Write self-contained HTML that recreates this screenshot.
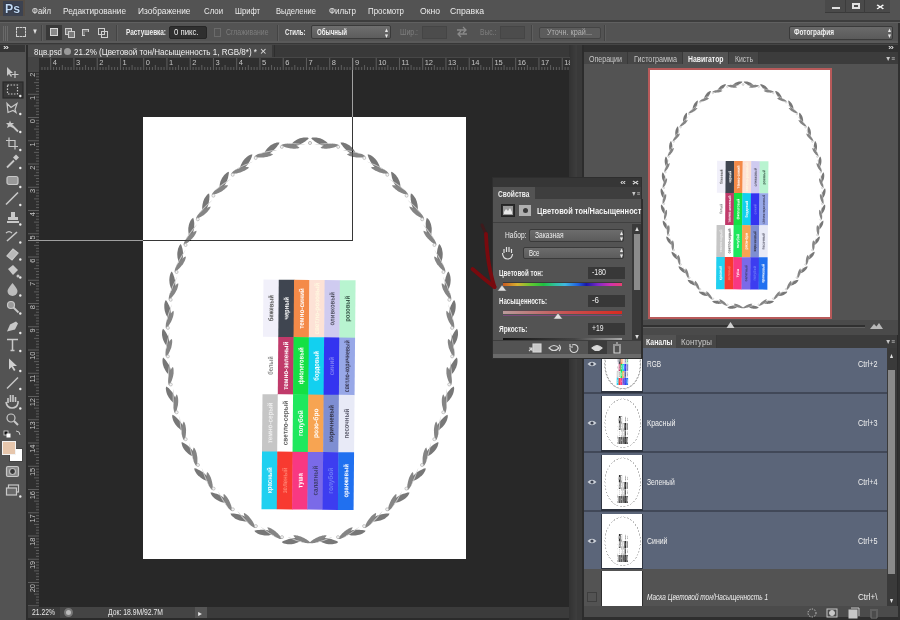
<!DOCTYPE html>
<html><head><meta charset="utf-8">
<style>
*{margin:0;padding:0;box-sizing:border-box}
html,body{width:900px;height:620px;overflow:hidden;background:#535353;font-family:"Liberation Sans",sans-serif}
.a{position:absolute}
.t{position:absolute;white-space:nowrap;transform-origin:0 0}
</style></head><body>
<div class="a" style="left:0px;top:0px;width:900px;height:20px;background:#535353;"></div>
<div class="a" style="left:0px;top:20px;width:900px;height:2px;background:#3d3d3d;"></div>
<div class="a" style="left:0px;top:22px;width:900px;height:1px;background:#606060;"></div>
<div class="a" style="left:0px;top:23px;width:900px;height:18px;background:#535353;"></div>
<div class="a" style="left:0px;top:41px;width:900px;height:2px;background:#5a5a5a;"></div>
<div class="a" style="left:0px;top:43px;width:900px;height:1px;background:#383838;"></div>
<div class="a" style="left:0px;top:44px;width:900px;height:1px;background:#454545;"></div>
<div class="a" style="left:0px;top:45px;width:26px;height:575px;background:#535353;"></div>
<div class="a" style="left:0px;top:45px;width:25px;height:7px;background:#353535;"></div>
<div class="a" style="left:26px;top:45px;width:2px;height:575px;background:#2c2c2c;"></div>
<div class="a" style="left:28px;top:45px;width:542px;height:12px;background:#393939;"></div>
<div class="a" style="left:28px;top:45px;width:244px;height:12px;background:#4b4b4b;"></div>
<div class="a" style="left:274px;top:45px;width:1px;height:12px;background:#2e2e2e;"></div>
<div class="a" style="left:28px;top:57px;width:542px;height:13px;background:#2f2f2f;"></div>
<div class="a" style="left:28px;top:57px;width:11px;height:550px;background:#2f2f2f;"></div>
<div class="a" style="left:28px;top:57px;width:11px;height:13px;background:#444444;"></div>
<div class="a" style="left:39px;top:70px;width:531px;height:537px;background:#282828;"></div>
<div class="a" style="left:28px;top:607px;width:542px;height:11px;background:#3b3b3b;"></div>
<div class="a" style="left:28px;top:618px;width:542px;height:2px;background:#2a2a2a;"></div>
<div class="a" style="left:569px;top:45px;width:8px;height:575px;background:linear-gradient(90deg,#323232,#3e3e3e);"></div>
<div class="a" style="left:577px;top:45px;width:5px;height:575px;background:#393939;"></div>
<div class="a" style="left:582px;top:45px;width:2px;height:575px;background:#2c2c2c;"></div>
<div class="a" style="left:584px;top:45px;width:316px;height:575px;background:#535353;"></div>
<div class="a" style="left:0px;top:0px;width:25px;height:16px;background:#544d46"></div>
<div class="a" style="left:3px;top:1px;width:20px;height:15px;background:#3c4250"></div>
<div class="a" style="left:825px;top:0px;width:65px;height:13px;background:#4a4a4a;"></div>
<div class="a" style="left:825px;top:12px;width:65px;height:1px;background:#3a3a3a;"></div>
<div class="a" style="left:845px;top:0px;width:1px;height:13px;background:#3c3c3c;"></div>
<div class="a" style="left:864px;top:0px;width:1px;height:13px;background:#3c3c3c;"></div>
<div class="a" style="left:832px;top:7px;width:8px;height:2px;background:#e0e0e0;"></div>
<div class="a" style="left:852px;top:3px;width:8px;height:6px;border:2px solid #e0e0e0;border-top-width:2px"></div>
<div class="a" style="left:3px;top:26px;width:1px;height:15px;background:#6a6a6a;"></div>
<div class="a" style="left:5px;top:26px;width:1px;height:15px;background:#6a6a6a;"></div>
<div class="a" style="left:7px;top:26px;width:1px;height:15px;background:#6a6a6a;"></div>
<div class="a" style="left:16px;top:27px;width:10px;height:10px;border:1px dashed #d0d0d0"></div>
<div class="a" style="left:41px;top:25px;width:1px;height:16px;background:#444;"></div>
<div class="a" style="left:42px;top:25px;width:1px;height:16px;background:#5e5e5e;"></div>
<div class="a" style="left:46px;top:25px;width:16px;height:15px;background:#393939;"></div>
<div class="a" style="left:50px;top:28px;width:8px;height:8px;border:1px solid #d8d8d8;background:#8a8a8a"></div>
<div class="a" style="left:65px;top:28px;width:7px;height:7px;border:1px solid #cfcfcf;background:#7a7a7a"></div><div class="a" style="left:68px;top:31px;width:7px;height:7px;border:1px solid #cfcfcf;background:#7a7a7a"></div>
<div class="a" style="left:82px;top:29px;width:7px;height:7px;border:1px solid #cfcfcf;background:#7a7a7a"></div><div class="a" style="left:85px;top:32px;width:5px;height:5px;background:#535353"></div>
<div class="a" style="left:98px;top:28px;width:7px;height:7px;border:1px solid #cfcfcf"></div><div class="a" style="left:101px;top:31px;width:7px;height:7px;border:1px solid #cfcfcf"></div>
<div class="a" style="left:116px;top:25px;width:1px;height:16px;background:#444;"></div>
<div class="a" style="left:117px;top:25px;width:1px;height:16px;background:#5e5e5e;"></div>
<div class="a" style="left:169px;top:26px;width:38px;height:13px;background:#2f2f2f;border-radius:2px;border:1px solid #262626"></div>
<div class="a" style="left:214px;top:28px;width:7px;height:9px;border:1px solid #6a6a6a"></div>
<div class="a" style="left:277px;top:25px;width:1px;height:16px;background:#444;"></div>
<div class="a" style="left:278px;top:25px;width:1px;height:16px;background:#5e5e5e;"></div>
<div class="a" style="left:311px;top:25px;width:80px;height:14px;background:linear-gradient(#6e6e6e,#5c5c5c);border:1px solid #3a3a3a;border-radius:2px"></div>
<div class="a" style="left:422px;top:26px;width:25px;height:13px;background:#4c4c4c;border:1px solid #454545"></div>
<svg class="a" style="left:456px;top:26px" width="12" height="12" fill="none" stroke="#8a8a8a" stroke-width="1.3"><path d="M1 4 h9 M7 1 l3 3 l-3 3 M11 8 h-9 M5 5 l-3 3 l3 3"/></svg>
<div class="a" style="left:500px;top:26px;width:25px;height:13px;background:#4c4c4c;border:1px solid #454545"></div>
<div class="a" style="left:531px;top:25px;width:1px;height:16px;background:#444;"></div>
<div class="a" style="left:532px;top:25px;width:1px;height:16px;background:#5e5e5e;"></div>
<div class="a" style="left:539px;top:27px;width:62px;height:12px;background:#5c5c5c;border:1px solid #444;border-radius:2px"></div>
<div class="a" style="left:604px;top:25px;width:1px;height:16px;background:#444;"></div>
<div class="a" style="left:605px;top:25px;width:1px;height:16px;background:#5e5e5e;"></div>
<div class="a" style="left:789px;top:26px;width:104px;height:14px;background:linear-gradient(#6a6a6a,#5a5a5a);border:1px solid #3a3a3a;border-radius:2px"></div>
<div class="a" style="left:64px;top:48px;width:7px;height:7px;border-radius:50%;background:#9a9a9a"></div>
<svg class="a" style="left:39px;top:57px" width="531" height="13"><rect x="2.48" y="10" width="1" height="3" fill="#5e5e5e"/><rect x="5.39" y="10" width="1" height="3" fill="#5e5e5e"/><rect x="8.29" y="10" width="1" height="3" fill="#5e5e5e"/><rect x="11.20" y="0" width="1" height="13" fill="#5e5e5e"/><rect x="14.11" y="10" width="1" height="3" fill="#5e5e5e"/><rect x="17.01" y="10" width="1" height="3" fill="#5e5e5e"/><rect x="19.92" y="10" width="1" height="3" fill="#5e5e5e"/><rect x="22.82" y="8" width="1" height="5" fill="#5e5e5e"/><rect x="25.73" y="10" width="1" height="3" fill="#5e5e5e"/><rect x="28.64" y="10" width="1" height="3" fill="#5e5e5e"/><rect x="31.54" y="10" width="1" height="3" fill="#5e5e5e"/><text x="13.70" y="8" font-size="7.5" fill="#c4c4c4" font-family="Liberation Sans">4</text><rect x="34.45" y="0" width="1" height="13" fill="#5e5e5e"/><rect x="37.36" y="10" width="1" height="3" fill="#5e5e5e"/><rect x="40.26" y="10" width="1" height="3" fill="#5e5e5e"/><rect x="43.17" y="10" width="1" height="3" fill="#5e5e5e"/><rect x="46.07" y="8" width="1" height="5" fill="#5e5e5e"/><rect x="48.98" y="10" width="1" height="3" fill="#5e5e5e"/><rect x="51.89" y="10" width="1" height="3" fill="#5e5e5e"/><rect x="54.79" y="10" width="1" height="3" fill="#5e5e5e"/><text x="36.95" y="8" font-size="7.5" fill="#c4c4c4" font-family="Liberation Sans">3</text><rect x="57.70" y="0" width="1" height="13" fill="#5e5e5e"/><rect x="60.61" y="10" width="1" height="3" fill="#5e5e5e"/><rect x="63.51" y="10" width="1" height="3" fill="#5e5e5e"/><rect x="66.42" y="10" width="1" height="3" fill="#5e5e5e"/><rect x="69.32" y="8" width="1" height="5" fill="#5e5e5e"/><rect x="72.23" y="10" width="1" height="3" fill="#5e5e5e"/><rect x="75.14" y="10" width="1" height="3" fill="#5e5e5e"/><rect x="78.04" y="10" width="1" height="3" fill="#5e5e5e"/><text x="60.20" y="8" font-size="7.5" fill="#c4c4c4" font-family="Liberation Sans">2</text><rect x="80.95" y="0" width="1" height="13" fill="#5e5e5e"/><rect x="83.86" y="10" width="1" height="3" fill="#5e5e5e"/><rect x="86.76" y="10" width="1" height="3" fill="#5e5e5e"/><rect x="89.67" y="10" width="1" height="3" fill="#5e5e5e"/><rect x="92.57" y="8" width="1" height="5" fill="#5e5e5e"/><rect x="95.48" y="10" width="1" height="3" fill="#5e5e5e"/><rect x="98.39" y="10" width="1" height="3" fill="#5e5e5e"/><rect x="101.29" y="10" width="1" height="3" fill="#5e5e5e"/><text x="83.45" y="8" font-size="7.5" fill="#c4c4c4" font-family="Liberation Sans">1</text><rect x="104.20" y="0" width="1" height="13" fill="#5e5e5e"/><rect x="107.11" y="10" width="1" height="3" fill="#5e5e5e"/><rect x="110.01" y="10" width="1" height="3" fill="#5e5e5e"/><rect x="112.92" y="10" width="1" height="3" fill="#5e5e5e"/><rect x="115.82" y="8" width="1" height="5" fill="#5e5e5e"/><rect x="118.73" y="10" width="1" height="3" fill="#5e5e5e"/><rect x="121.64" y="10" width="1" height="3" fill="#5e5e5e"/><rect x="124.54" y="10" width="1" height="3" fill="#5e5e5e"/><text x="106.70" y="8" font-size="7.5" fill="#c4c4c4" font-family="Liberation Sans">0</text><rect x="127.45" y="0" width="1" height="13" fill="#5e5e5e"/><rect x="130.36" y="10" width="1" height="3" fill="#5e5e5e"/><rect x="133.26" y="10" width="1" height="3" fill="#5e5e5e"/><rect x="136.17" y="10" width="1" height="3" fill="#5e5e5e"/><rect x="139.07" y="8" width="1" height="5" fill="#5e5e5e"/><rect x="141.98" y="10" width="1" height="3" fill="#5e5e5e"/><rect x="144.89" y="10" width="1" height="3" fill="#5e5e5e"/><rect x="147.79" y="10" width="1" height="3" fill="#5e5e5e"/><text x="129.95" y="8" font-size="7.5" fill="#c4c4c4" font-family="Liberation Sans">1</text><rect x="150.70" y="0" width="1" height="13" fill="#5e5e5e"/><rect x="153.61" y="10" width="1" height="3" fill="#5e5e5e"/><rect x="156.51" y="10" width="1" height="3" fill="#5e5e5e"/><rect x="159.42" y="10" width="1" height="3" fill="#5e5e5e"/><rect x="162.32" y="8" width="1" height="5" fill="#5e5e5e"/><rect x="165.23" y="10" width="1" height="3" fill="#5e5e5e"/><rect x="168.14" y="10" width="1" height="3" fill="#5e5e5e"/><rect x="171.04" y="10" width="1" height="3" fill="#5e5e5e"/><text x="153.20" y="8" font-size="7.5" fill="#c4c4c4" font-family="Liberation Sans">2</text><rect x="173.95" y="0" width="1" height="13" fill="#5e5e5e"/><rect x="176.86" y="10" width="1" height="3" fill="#5e5e5e"/><rect x="179.76" y="10" width="1" height="3" fill="#5e5e5e"/><rect x="182.67" y="10" width="1" height="3" fill="#5e5e5e"/><rect x="185.57" y="8" width="1" height="5" fill="#5e5e5e"/><rect x="188.48" y="10" width="1" height="3" fill="#5e5e5e"/><rect x="191.39" y="10" width="1" height="3" fill="#5e5e5e"/><rect x="194.29" y="10" width="1" height="3" fill="#5e5e5e"/><text x="176.45" y="8" font-size="7.5" fill="#c4c4c4" font-family="Liberation Sans">3</text><rect x="197.20" y="0" width="1" height="13" fill="#5e5e5e"/><rect x="200.11" y="10" width="1" height="3" fill="#5e5e5e"/><rect x="203.01" y="10" width="1" height="3" fill="#5e5e5e"/><rect x="205.92" y="10" width="1" height="3" fill="#5e5e5e"/><rect x="208.82" y="8" width="1" height="5" fill="#5e5e5e"/><rect x="211.73" y="10" width="1" height="3" fill="#5e5e5e"/><rect x="214.64" y="10" width="1" height="3" fill="#5e5e5e"/><rect x="217.54" y="10" width="1" height="3" fill="#5e5e5e"/><text x="199.70" y="8" font-size="7.5" fill="#c4c4c4" font-family="Liberation Sans">4</text><rect x="220.45" y="0" width="1" height="13" fill="#5e5e5e"/><rect x="223.36" y="10" width="1" height="3" fill="#5e5e5e"/><rect x="226.26" y="10" width="1" height="3" fill="#5e5e5e"/><rect x="229.17" y="10" width="1" height="3" fill="#5e5e5e"/><rect x="232.07" y="8" width="1" height="5" fill="#5e5e5e"/><rect x="234.98" y="10" width="1" height="3" fill="#5e5e5e"/><rect x="237.89" y="10" width="1" height="3" fill="#5e5e5e"/><rect x="240.79" y="10" width="1" height="3" fill="#5e5e5e"/><text x="222.95" y="8" font-size="7.5" fill="#c4c4c4" font-family="Liberation Sans">5</text><rect x="243.70" y="0" width="1" height="13" fill="#5e5e5e"/><rect x="246.61" y="10" width="1" height="3" fill="#5e5e5e"/><rect x="249.51" y="10" width="1" height="3" fill="#5e5e5e"/><rect x="252.42" y="10" width="1" height="3" fill="#5e5e5e"/><rect x="255.32" y="8" width="1" height="5" fill="#5e5e5e"/><rect x="258.23" y="10" width="1" height="3" fill="#5e5e5e"/><rect x="261.14" y="10" width="1" height="3" fill="#5e5e5e"/><rect x="264.04" y="10" width="1" height="3" fill="#5e5e5e"/><text x="246.20" y="8" font-size="7.5" fill="#c4c4c4" font-family="Liberation Sans">6</text><rect x="266.95" y="0" width="1" height="13" fill="#5e5e5e"/><rect x="269.86" y="10" width="1" height="3" fill="#5e5e5e"/><rect x="272.76" y="10" width="1" height="3" fill="#5e5e5e"/><rect x="275.67" y="10" width="1" height="3" fill="#5e5e5e"/><rect x="278.57" y="8" width="1" height="5" fill="#5e5e5e"/><rect x="281.48" y="10" width="1" height="3" fill="#5e5e5e"/><rect x="284.39" y="10" width="1" height="3" fill="#5e5e5e"/><rect x="287.29" y="10" width="1" height="3" fill="#5e5e5e"/><text x="269.45" y="8" font-size="7.5" fill="#c4c4c4" font-family="Liberation Sans">7</text><rect x="290.20" y="0" width="1" height="13" fill="#5e5e5e"/><rect x="293.11" y="10" width="1" height="3" fill="#5e5e5e"/><rect x="296.01" y="10" width="1" height="3" fill="#5e5e5e"/><rect x="298.92" y="10" width="1" height="3" fill="#5e5e5e"/><rect x="301.82" y="8" width="1" height="5" fill="#5e5e5e"/><rect x="304.73" y="10" width="1" height="3" fill="#5e5e5e"/><rect x="307.64" y="10" width="1" height="3" fill="#5e5e5e"/><rect x="310.54" y="10" width="1" height="3" fill="#5e5e5e"/><text x="292.70" y="8" font-size="7.5" fill="#c4c4c4" font-family="Liberation Sans">8</text><rect x="313.45" y="0" width="1" height="13" fill="#5e5e5e"/><rect x="316.36" y="10" width="1" height="3" fill="#5e5e5e"/><rect x="319.26" y="10" width="1" height="3" fill="#5e5e5e"/><rect x="322.17" y="10" width="1" height="3" fill="#5e5e5e"/><rect x="325.07" y="8" width="1" height="5" fill="#5e5e5e"/><rect x="327.98" y="10" width="1" height="3" fill="#5e5e5e"/><rect x="330.89" y="10" width="1" height="3" fill="#5e5e5e"/><rect x="333.79" y="10" width="1" height="3" fill="#5e5e5e"/><text x="315.95" y="8" font-size="7.5" fill="#c4c4c4" font-family="Liberation Sans">9</text><rect x="336.70" y="0" width="1" height="13" fill="#5e5e5e"/><rect x="339.61" y="10" width="1" height="3" fill="#5e5e5e"/><rect x="342.51" y="10" width="1" height="3" fill="#5e5e5e"/><rect x="345.42" y="10" width="1" height="3" fill="#5e5e5e"/><rect x="348.32" y="8" width="1" height="5" fill="#5e5e5e"/><rect x="351.23" y="10" width="1" height="3" fill="#5e5e5e"/><rect x="354.14" y="10" width="1" height="3" fill="#5e5e5e"/><rect x="357.04" y="10" width="1" height="3" fill="#5e5e5e"/><text x="339.20" y="8" font-size="7.5" fill="#c4c4c4" font-family="Liberation Sans">10</text><rect x="359.95" y="0" width="1" height="13" fill="#5e5e5e"/><rect x="362.86" y="10" width="1" height="3" fill="#5e5e5e"/><rect x="365.76" y="10" width="1" height="3" fill="#5e5e5e"/><rect x="368.67" y="10" width="1" height="3" fill="#5e5e5e"/><rect x="371.57" y="8" width="1" height="5" fill="#5e5e5e"/><rect x="374.48" y="10" width="1" height="3" fill="#5e5e5e"/><rect x="377.39" y="10" width="1" height="3" fill="#5e5e5e"/><rect x="380.29" y="10" width="1" height="3" fill="#5e5e5e"/><text x="362.45" y="8" font-size="7.5" fill="#c4c4c4" font-family="Liberation Sans">11</text><rect x="383.20" y="0" width="1" height="13" fill="#5e5e5e"/><rect x="386.11" y="10" width="1" height="3" fill="#5e5e5e"/><rect x="389.01" y="10" width="1" height="3" fill="#5e5e5e"/><rect x="391.92" y="10" width="1" height="3" fill="#5e5e5e"/><rect x="394.82" y="8" width="1" height="5" fill="#5e5e5e"/><rect x="397.73" y="10" width="1" height="3" fill="#5e5e5e"/><rect x="400.64" y="10" width="1" height="3" fill="#5e5e5e"/><rect x="403.54" y="10" width="1" height="3" fill="#5e5e5e"/><text x="385.70" y="8" font-size="7.5" fill="#c4c4c4" font-family="Liberation Sans">12</text><rect x="406.45" y="0" width="1" height="13" fill="#5e5e5e"/><rect x="409.36" y="10" width="1" height="3" fill="#5e5e5e"/><rect x="412.26" y="10" width="1" height="3" fill="#5e5e5e"/><rect x="415.17" y="10" width="1" height="3" fill="#5e5e5e"/><rect x="418.07" y="8" width="1" height="5" fill="#5e5e5e"/><rect x="420.98" y="10" width="1" height="3" fill="#5e5e5e"/><rect x="423.89" y="10" width="1" height="3" fill="#5e5e5e"/><rect x="426.79" y="10" width="1" height="3" fill="#5e5e5e"/><text x="408.95" y="8" font-size="7.5" fill="#c4c4c4" font-family="Liberation Sans">13</text><rect x="429.70" y="0" width="1" height="13" fill="#5e5e5e"/><rect x="432.61" y="10" width="1" height="3" fill="#5e5e5e"/><rect x="435.51" y="10" width="1" height="3" fill="#5e5e5e"/><rect x="438.42" y="10" width="1" height="3" fill="#5e5e5e"/><rect x="441.32" y="8" width="1" height="5" fill="#5e5e5e"/><rect x="444.23" y="10" width="1" height="3" fill="#5e5e5e"/><rect x="447.14" y="10" width="1" height="3" fill="#5e5e5e"/><rect x="450.04" y="10" width="1" height="3" fill="#5e5e5e"/><text x="432.20" y="8" font-size="7.5" fill="#c4c4c4" font-family="Liberation Sans">14</text><rect x="452.95" y="0" width="1" height="13" fill="#5e5e5e"/><rect x="455.86" y="10" width="1" height="3" fill="#5e5e5e"/><rect x="458.76" y="10" width="1" height="3" fill="#5e5e5e"/><rect x="461.67" y="10" width="1" height="3" fill="#5e5e5e"/><rect x="464.57" y="8" width="1" height="5" fill="#5e5e5e"/><rect x="467.48" y="10" width="1" height="3" fill="#5e5e5e"/><rect x="470.39" y="10" width="1" height="3" fill="#5e5e5e"/><rect x="473.29" y="10" width="1" height="3" fill="#5e5e5e"/><text x="455.45" y="8" font-size="7.5" fill="#c4c4c4" font-family="Liberation Sans">15</text><rect x="476.20" y="0" width="1" height="13" fill="#5e5e5e"/><rect x="479.11" y="10" width="1" height="3" fill="#5e5e5e"/><rect x="482.01" y="10" width="1" height="3" fill="#5e5e5e"/><rect x="484.92" y="10" width="1" height="3" fill="#5e5e5e"/><rect x="487.83" y="8" width="1" height="5" fill="#5e5e5e"/><rect x="490.73" y="10" width="1" height="3" fill="#5e5e5e"/><rect x="493.64" y="10" width="1" height="3" fill="#5e5e5e"/><rect x="496.54" y="10" width="1" height="3" fill="#5e5e5e"/><text x="478.70" y="8" font-size="7.5" fill="#c4c4c4" font-family="Liberation Sans">16</text><rect x="499.45" y="0" width="1" height="13" fill="#5e5e5e"/><rect x="502.36" y="10" width="1" height="3" fill="#5e5e5e"/><rect x="505.26" y="10" width="1" height="3" fill="#5e5e5e"/><rect x="508.17" y="10" width="1" height="3" fill="#5e5e5e"/><rect x="511.08" y="8" width="1" height="5" fill="#5e5e5e"/><rect x="513.98" y="10" width="1" height="3" fill="#5e5e5e"/><rect x="516.89" y="10" width="1" height="3" fill="#5e5e5e"/><rect x="519.79" y="10" width="1" height="3" fill="#5e5e5e"/><text x="501.95" y="8" font-size="7.5" fill="#c4c4c4" font-family="Liberation Sans">17</text><rect x="522.70" y="0" width="1" height="13" fill="#5e5e5e"/><rect x="525.61" y="10" width="1" height="3" fill="#5e5e5e"/><rect x="528.51" y="10" width="1" height="3" fill="#5e5e5e"/><text x="525.20" y="8" font-size="7.5" fill="#c4c4c4" font-family="Liberation Sans">18</text><rect x="0" y="0" width="531" height="1" fill="#474747"/></svg>
<svg class="a" style="left:28px;top:70px" width="11" height="537"><rect y="0.50" x="0" height="1" width="11" fill="#5e5e5e"/><rect y="3.41" x="8" height="1" width="3" fill="#5e5e5e"/><rect y="6.31" x="8" height="1" width="3" fill="#5e5e5e"/><rect y="9.22" x="8" height="1" width="3" fill="#5e5e5e"/><rect y="12.12" x="6" height="1" width="5" fill="#5e5e5e"/><rect y="15.03" x="8" height="1" width="3" fill="#5e5e5e"/><rect y="17.94" x="8" height="1" width="3" fill="#5e5e5e"/><rect y="20.84" x="8" height="1" width="3" fill="#5e5e5e"/><text x="0" y="0" transform="translate(7.3 2.50) rotate(-90)" text-anchor="end" font-size="7.5" fill="#c4c4c4" font-family="Liberation Sans">2</text><rect y="23.75" x="0" height="1" width="11" fill="#5e5e5e"/><rect y="26.66" x="8" height="1" width="3" fill="#5e5e5e"/><rect y="29.56" x="8" height="1" width="3" fill="#5e5e5e"/><rect y="32.47" x="8" height="1" width="3" fill="#5e5e5e"/><rect y="35.38" x="6" height="1" width="5" fill="#5e5e5e"/><rect y="38.28" x="8" height="1" width="3" fill="#5e5e5e"/><rect y="41.19" x="8" height="1" width="3" fill="#5e5e5e"/><rect y="44.09" x="8" height="1" width="3" fill="#5e5e5e"/><text x="0" y="0" transform="translate(7.3 25.75) rotate(-90)" text-anchor="end" font-size="7.5" fill="#c4c4c4" font-family="Liberation Sans">1</text><rect y="47.00" x="0" height="1" width="11" fill="#5e5e5e"/><rect y="49.91" x="8" height="1" width="3" fill="#5e5e5e"/><rect y="52.81" x="8" height="1" width="3" fill="#5e5e5e"/><rect y="55.72" x="8" height="1" width="3" fill="#5e5e5e"/><rect y="58.62" x="6" height="1" width="5" fill="#5e5e5e"/><rect y="61.53" x="8" height="1" width="3" fill="#5e5e5e"/><rect y="64.44" x="8" height="1" width="3" fill="#5e5e5e"/><rect y="67.34" x="8" height="1" width="3" fill="#5e5e5e"/><text x="0" y="0" transform="translate(7.3 49.00) rotate(-90)" text-anchor="end" font-size="7.5" fill="#c4c4c4" font-family="Liberation Sans">0</text><rect y="70.25" x="0" height="1" width="11" fill="#5e5e5e"/><rect y="73.16" x="8" height="1" width="3" fill="#5e5e5e"/><rect y="76.06" x="8" height="1" width="3" fill="#5e5e5e"/><rect y="78.97" x="8" height="1" width="3" fill="#5e5e5e"/><rect y="81.88" x="6" height="1" width="5" fill="#5e5e5e"/><rect y="84.78" x="8" height="1" width="3" fill="#5e5e5e"/><rect y="87.69" x="8" height="1" width="3" fill="#5e5e5e"/><rect y="90.59" x="8" height="1" width="3" fill="#5e5e5e"/><text x="0" y="0" transform="translate(7.3 72.25) rotate(-90)" text-anchor="end" font-size="7.5" fill="#c4c4c4" font-family="Liberation Sans">1</text><rect y="93.50" x="0" height="1" width="11" fill="#5e5e5e"/><rect y="96.41" x="8" height="1" width="3" fill="#5e5e5e"/><rect y="99.31" x="8" height="1" width="3" fill="#5e5e5e"/><rect y="102.22" x="8" height="1" width="3" fill="#5e5e5e"/><rect y="105.12" x="6" height="1" width="5" fill="#5e5e5e"/><rect y="108.03" x="8" height="1" width="3" fill="#5e5e5e"/><rect y="110.94" x="8" height="1" width="3" fill="#5e5e5e"/><rect y="113.84" x="8" height="1" width="3" fill="#5e5e5e"/><text x="0" y="0" transform="translate(7.3 95.50) rotate(-90)" text-anchor="end" font-size="7.5" fill="#c4c4c4" font-family="Liberation Sans">2</text><rect y="116.75" x="0" height="1" width="11" fill="#5e5e5e"/><rect y="119.66" x="8" height="1" width="3" fill="#5e5e5e"/><rect y="122.56" x="8" height="1" width="3" fill="#5e5e5e"/><rect y="125.47" x="8" height="1" width="3" fill="#5e5e5e"/><rect y="128.38" x="6" height="1" width="5" fill="#5e5e5e"/><rect y="131.28" x="8" height="1" width="3" fill="#5e5e5e"/><rect y="134.19" x="8" height="1" width="3" fill="#5e5e5e"/><rect y="137.09" x="8" height="1" width="3" fill="#5e5e5e"/><text x="0" y="0" transform="translate(7.3 118.75) rotate(-90)" text-anchor="end" font-size="7.5" fill="#c4c4c4" font-family="Liberation Sans">3</text><rect y="140.00" x="0" height="1" width="11" fill="#5e5e5e"/><rect y="142.91" x="8" height="1" width="3" fill="#5e5e5e"/><rect y="145.81" x="8" height="1" width="3" fill="#5e5e5e"/><rect y="148.72" x="8" height="1" width="3" fill="#5e5e5e"/><rect y="151.62" x="6" height="1" width="5" fill="#5e5e5e"/><rect y="154.53" x="8" height="1" width="3" fill="#5e5e5e"/><rect y="157.44" x="8" height="1" width="3" fill="#5e5e5e"/><rect y="160.34" x="8" height="1" width="3" fill="#5e5e5e"/><text x="0" y="0" transform="translate(7.3 142.00) rotate(-90)" text-anchor="end" font-size="7.5" fill="#c4c4c4" font-family="Liberation Sans">4</text><rect y="163.25" x="0" height="1" width="11" fill="#5e5e5e"/><rect y="166.16" x="8" height="1" width="3" fill="#5e5e5e"/><rect y="169.06" x="8" height="1" width="3" fill="#5e5e5e"/><rect y="171.97" x="8" height="1" width="3" fill="#5e5e5e"/><rect y="174.88" x="6" height="1" width="5" fill="#5e5e5e"/><rect y="177.78" x="8" height="1" width="3" fill="#5e5e5e"/><rect y="180.69" x="8" height="1" width="3" fill="#5e5e5e"/><rect y="183.59" x="8" height="1" width="3" fill="#5e5e5e"/><text x="0" y="0" transform="translate(7.3 165.25) rotate(-90)" text-anchor="end" font-size="7.5" fill="#c4c4c4" font-family="Liberation Sans">5</text><rect y="186.50" x="0" height="1" width="11" fill="#5e5e5e"/><rect y="189.41" x="8" height="1" width="3" fill="#5e5e5e"/><rect y="192.31" x="8" height="1" width="3" fill="#5e5e5e"/><rect y="195.22" x="8" height="1" width="3" fill="#5e5e5e"/><rect y="198.12" x="6" height="1" width="5" fill="#5e5e5e"/><rect y="201.03" x="8" height="1" width="3" fill="#5e5e5e"/><rect y="203.94" x="8" height="1" width="3" fill="#5e5e5e"/><rect y="206.84" x="8" height="1" width="3" fill="#5e5e5e"/><text x="0" y="0" transform="translate(7.3 188.50) rotate(-90)" text-anchor="end" font-size="7.5" fill="#c4c4c4" font-family="Liberation Sans">6</text><rect y="209.75" x="0" height="1" width="11" fill="#5e5e5e"/><rect y="212.66" x="8" height="1" width="3" fill="#5e5e5e"/><rect y="215.56" x="8" height="1" width="3" fill="#5e5e5e"/><rect y="218.47" x="8" height="1" width="3" fill="#5e5e5e"/><rect y="221.38" x="6" height="1" width="5" fill="#5e5e5e"/><rect y="224.28" x="8" height="1" width="3" fill="#5e5e5e"/><rect y="227.19" x="8" height="1" width="3" fill="#5e5e5e"/><rect y="230.09" x="8" height="1" width="3" fill="#5e5e5e"/><text x="0" y="0" transform="translate(7.3 211.75) rotate(-90)" text-anchor="end" font-size="7.5" fill="#c4c4c4" font-family="Liberation Sans">7</text><rect y="233.00" x="0" height="1" width="11" fill="#5e5e5e"/><rect y="235.91" x="8" height="1" width="3" fill="#5e5e5e"/><rect y="238.81" x="8" height="1" width="3" fill="#5e5e5e"/><rect y="241.72" x="8" height="1" width="3" fill="#5e5e5e"/><rect y="244.62" x="6" height="1" width="5" fill="#5e5e5e"/><rect y="247.53" x="8" height="1" width="3" fill="#5e5e5e"/><rect y="250.44" x="8" height="1" width="3" fill="#5e5e5e"/><rect y="253.34" x="8" height="1" width="3" fill="#5e5e5e"/><text x="0" y="0" transform="translate(7.3 235.00) rotate(-90)" text-anchor="end" font-size="7.5" fill="#c4c4c4" font-family="Liberation Sans">8</text><rect y="256.25" x="0" height="1" width="11" fill="#5e5e5e"/><rect y="259.16" x="8" height="1" width="3" fill="#5e5e5e"/><rect y="262.06" x="8" height="1" width="3" fill="#5e5e5e"/><rect y="264.97" x="8" height="1" width="3" fill="#5e5e5e"/><rect y="267.88" x="6" height="1" width="5" fill="#5e5e5e"/><rect y="270.78" x="8" height="1" width="3" fill="#5e5e5e"/><rect y="273.69" x="8" height="1" width="3" fill="#5e5e5e"/><rect y="276.59" x="8" height="1" width="3" fill="#5e5e5e"/><text x="0" y="0" transform="translate(7.3 258.25) rotate(-90)" text-anchor="end" font-size="7.5" fill="#c4c4c4" font-family="Liberation Sans">9</text><rect y="279.50" x="0" height="1" width="11" fill="#5e5e5e"/><rect y="282.41" x="8" height="1" width="3" fill="#5e5e5e"/><rect y="285.31" x="8" height="1" width="3" fill="#5e5e5e"/><rect y="288.22" x="8" height="1" width="3" fill="#5e5e5e"/><rect y="291.12" x="6" height="1" width="5" fill="#5e5e5e"/><rect y="294.03" x="8" height="1" width="3" fill="#5e5e5e"/><rect y="296.94" x="8" height="1" width="3" fill="#5e5e5e"/><rect y="299.84" x="8" height="1" width="3" fill="#5e5e5e"/><text x="0" y="0" transform="translate(7.3 281.50) rotate(-90)" text-anchor="end" font-size="7.5" fill="#c4c4c4" font-family="Liberation Sans">10</text><rect y="302.75" x="0" height="1" width="11" fill="#5e5e5e"/><rect y="305.66" x="8" height="1" width="3" fill="#5e5e5e"/><rect y="308.56" x="8" height="1" width="3" fill="#5e5e5e"/><rect y="311.47" x="8" height="1" width="3" fill="#5e5e5e"/><rect y="314.38" x="6" height="1" width="5" fill="#5e5e5e"/><rect y="317.28" x="8" height="1" width="3" fill="#5e5e5e"/><rect y="320.19" x="8" height="1" width="3" fill="#5e5e5e"/><rect y="323.09" x="8" height="1" width="3" fill="#5e5e5e"/><text x="0" y="0" transform="translate(7.3 304.75) rotate(-90)" text-anchor="end" font-size="7.5" fill="#c4c4c4" font-family="Liberation Sans">11</text><rect y="326.00" x="0" height="1" width="11" fill="#5e5e5e"/><rect y="328.91" x="8" height="1" width="3" fill="#5e5e5e"/><rect y="331.81" x="8" height="1" width="3" fill="#5e5e5e"/><rect y="334.72" x="8" height="1" width="3" fill="#5e5e5e"/><rect y="337.62" x="6" height="1" width="5" fill="#5e5e5e"/><rect y="340.53" x="8" height="1" width="3" fill="#5e5e5e"/><rect y="343.44" x="8" height="1" width="3" fill="#5e5e5e"/><rect y="346.34" x="8" height="1" width="3" fill="#5e5e5e"/><text x="0" y="0" transform="translate(7.3 328.00) rotate(-90)" text-anchor="end" font-size="7.5" fill="#c4c4c4" font-family="Liberation Sans">12</text><rect y="349.25" x="0" height="1" width="11" fill="#5e5e5e"/><rect y="352.16" x="8" height="1" width="3" fill="#5e5e5e"/><rect y="355.06" x="8" height="1" width="3" fill="#5e5e5e"/><rect y="357.97" x="8" height="1" width="3" fill="#5e5e5e"/><rect y="360.88" x="6" height="1" width="5" fill="#5e5e5e"/><rect y="363.78" x="8" height="1" width="3" fill="#5e5e5e"/><rect y="366.69" x="8" height="1" width="3" fill="#5e5e5e"/><rect y="369.59" x="8" height="1" width="3" fill="#5e5e5e"/><text x="0" y="0" transform="translate(7.3 351.25) rotate(-90)" text-anchor="end" font-size="7.5" fill="#c4c4c4" font-family="Liberation Sans">13</text><rect y="372.50" x="0" height="1" width="11" fill="#5e5e5e"/><rect y="375.41" x="8" height="1" width="3" fill="#5e5e5e"/><rect y="378.31" x="8" height="1" width="3" fill="#5e5e5e"/><rect y="381.22" x="8" height="1" width="3" fill="#5e5e5e"/><rect y="384.12" x="6" height="1" width="5" fill="#5e5e5e"/><rect y="387.03" x="8" height="1" width="3" fill="#5e5e5e"/><rect y="389.94" x="8" height="1" width="3" fill="#5e5e5e"/><rect y="392.84" x="8" height="1" width="3" fill="#5e5e5e"/><text x="0" y="0" transform="translate(7.3 374.50) rotate(-90)" text-anchor="end" font-size="7.5" fill="#c4c4c4" font-family="Liberation Sans">14</text><rect y="395.75" x="0" height="1" width="11" fill="#5e5e5e"/><rect y="398.66" x="8" height="1" width="3" fill="#5e5e5e"/><rect y="401.56" x="8" height="1" width="3" fill="#5e5e5e"/><rect y="404.47" x="8" height="1" width="3" fill="#5e5e5e"/><rect y="407.38" x="6" height="1" width="5" fill="#5e5e5e"/><rect y="410.28" x="8" height="1" width="3" fill="#5e5e5e"/><rect y="413.19" x="8" height="1" width="3" fill="#5e5e5e"/><rect y="416.09" x="8" height="1" width="3" fill="#5e5e5e"/><text x="0" y="0" transform="translate(7.3 397.75) rotate(-90)" text-anchor="end" font-size="7.5" fill="#c4c4c4" font-family="Liberation Sans">15</text><rect y="419.00" x="0" height="1" width="11" fill="#5e5e5e"/><rect y="421.91" x="8" height="1" width="3" fill="#5e5e5e"/><rect y="424.81" x="8" height="1" width="3" fill="#5e5e5e"/><rect y="427.72" x="8" height="1" width="3" fill="#5e5e5e"/><rect y="430.62" x="6" height="1" width="5" fill="#5e5e5e"/><rect y="433.53" x="8" height="1" width="3" fill="#5e5e5e"/><rect y="436.44" x="8" height="1" width="3" fill="#5e5e5e"/><rect y="439.34" x="8" height="1" width="3" fill="#5e5e5e"/><text x="0" y="0" transform="translate(7.3 421.00) rotate(-90)" text-anchor="end" font-size="7.5" fill="#c4c4c4" font-family="Liberation Sans">16</text><rect y="442.25" x="0" height="1" width="11" fill="#5e5e5e"/><rect y="445.16" x="8" height="1" width="3" fill="#5e5e5e"/><rect y="448.06" x="8" height="1" width="3" fill="#5e5e5e"/><rect y="450.97" x="8" height="1" width="3" fill="#5e5e5e"/><rect y="453.88" x="6" height="1" width="5" fill="#5e5e5e"/><rect y="456.78" x="8" height="1" width="3" fill="#5e5e5e"/><rect y="459.69" x="8" height="1" width="3" fill="#5e5e5e"/><rect y="462.59" x="8" height="1" width="3" fill="#5e5e5e"/><text x="0" y="0" transform="translate(7.3 444.25) rotate(-90)" text-anchor="end" font-size="7.5" fill="#c4c4c4" font-family="Liberation Sans">17</text><rect y="465.50" x="0" height="1" width="11" fill="#5e5e5e"/><rect y="468.41" x="8" height="1" width="3" fill="#5e5e5e"/><rect y="471.31" x="8" height="1" width="3" fill="#5e5e5e"/><rect y="474.22" x="8" height="1" width="3" fill="#5e5e5e"/><rect y="477.12" x="6" height="1" width="5" fill="#5e5e5e"/><rect y="480.03" x="8" height="1" width="3" fill="#5e5e5e"/><rect y="482.94" x="8" height="1" width="3" fill="#5e5e5e"/><rect y="485.84" x="8" height="1" width="3" fill="#5e5e5e"/><text x="0" y="0" transform="translate(7.3 467.50) rotate(-90)" text-anchor="end" font-size="7.5" fill="#c4c4c4" font-family="Liberation Sans">18</text><rect y="488.75" x="0" height="1" width="11" fill="#5e5e5e"/><rect y="491.66" x="8" height="1" width="3" fill="#5e5e5e"/><rect y="494.56" x="8" height="1" width="3" fill="#5e5e5e"/><rect y="497.47" x="8" height="1" width="3" fill="#5e5e5e"/><rect y="500.38" x="6" height="1" width="5" fill="#5e5e5e"/><rect y="503.28" x="8" height="1" width="3" fill="#5e5e5e"/><rect y="506.19" x="8" height="1" width="3" fill="#5e5e5e"/><rect y="509.09" x="8" height="1" width="3" fill="#5e5e5e"/><text x="0" y="0" transform="translate(7.3 490.75) rotate(-90)" text-anchor="end" font-size="7.5" fill="#c4c4c4" font-family="Liberation Sans">19</text><rect y="512.00" x="0" height="1" width="11" fill="#5e5e5e"/><rect y="514.91" x="8" height="1" width="3" fill="#5e5e5e"/><rect y="517.81" x="8" height="1" width="3" fill="#5e5e5e"/><rect y="520.72" x="8" height="1" width="3" fill="#5e5e5e"/><rect y="523.62" x="6" height="1" width="5" fill="#5e5e5e"/><rect y="526.53" x="8" height="1" width="3" fill="#5e5e5e"/><rect y="529.44" x="8" height="1" width="3" fill="#5e5e5e"/><rect y="532.34" x="8" height="1" width="3" fill="#5e5e5e"/><text x="0" y="0" transform="translate(7.3 514.00) rotate(-90)" text-anchor="end" font-size="7.5" fill="#c4c4c4" font-family="Liberation Sans">20</text><rect y="535.25" x="0" height="1" width="11" fill="#5e5e5e"/></svg>
<div class="a" style="left:60px;top:607px;width:136px;height:11px;background:#444444;"></div>
<div class="a" style="left:64px;top:608px;width:9px;height:9px;border-radius:50%;background:#bdbdbd;border:2px solid #777"></div>
<div class="a" style="left:195px;top:607px;width:12px;height:11px;background:#555;"></div>
<svg class="a" style="left:0;top:45px" width="26" height="575" fill="none" stroke="#c8c8c8" stroke-width="1.2"><path d="M7 22 l0 9 l2 -2 l2 3 l1 -1 l-2 -3 l3 0z" fill="#c8c8c8" stroke="none"/><path d="M15 26 v7 M11.5 29.5 h7"/><rect x="3" y="37.0" width="20" height="16" fill="#383838" stroke="#2a2a2a"/><rect x="7.5" y="40.0" width="10" height="9" stroke-dasharray="1.6 1.4"/><circle cx="20.3" cy="51.0" r="1.2" fill="#ececec" stroke="none"/><path d="M7 58.5 l4 4 l6 -4 l-2 6 l1 3 l-3 -2 l-5 2z" /><circle cx="20.3" cy="69.0" r="1.2" fill="#ececec" stroke="none"/><path d="M12 80.5 l6 6" stroke-width="1.8"/><path d="M10 75.5 l1 2.5 l3 0 l-2 2 l1 3 l-3 -1.5 l-3 1.5 l1 -3 l-2 -2 l3 0z" fill="#c8c8c8" stroke="none"/><circle cx="20.3" cy="87.0" r="1.2" fill="#ececec" stroke="none"/><path d="M9 92.5 v9 h9 M6 95.5 h9 v9"/><circle cx="20.3" cy="105.0" r="1.2" fill="#ececec" stroke="none"/><path d="M7 122.5 l7 -7" stroke-width="1.8"/><path d="M13 112.5 l3 -3 l3 3 l-3 3z" fill="#c8c8c8" stroke="none"/><circle cx="20.3" cy="123.0" r="1.2" fill="#ececec" stroke="none"/><rect x="7" y="131.5" width="11" height="8" rx="2" fill="#9a9a9a" stroke="#c8c8c8"/><circle cx="20.3" cy="142.0" r="1.2" fill="#ececec" stroke="none"/><path d="M6 159.5 l3 -3 M9 156.5 l9 -9" stroke-width="1.6"/><circle cx="20.3" cy="160.0" r="1.2" fill="#ececec" stroke="none"/><path d="M11 167 h4 v5 h3 v3 h-10 v-3 h3z" fill="#c8c8c8" stroke="none"/><rect x="7" y="176" width="12" height="2" fill="#c8c8c8" stroke="none"/><circle cx="20.3" cy="179.5" r="1.2" fill="#ececec" stroke="none"/><path d="M7 196 l10 -9" stroke-width="1.6"/><path d="M6 188 q3 -3 6 0" /><circle cx="20.3" cy="197.5" r="1.2" fill="#ececec" stroke="none"/><path d="M7 211 l6 -7 l5 4 l-6 7z" fill="#b8b8b8" stroke="#c8c8c8"/><circle cx="20.3" cy="214.5" r="1.2" fill="#ececec" stroke="none"/><path d="M8 224 l5 -4 l5 5 l-5 5z" fill="#c8c8c8" stroke="none"/><circle cx="18" cy="231" r="1.5" fill="#c8c8c8" stroke="none"/><circle cx="20.3" cy="232.5" r="1.2" fill="#ececec" stroke="none"/><path d="M12.5 238 q5 6 5 8 a5 5 0 0 1 -10 0 q0 -2 5 -8z" fill="#bdbdbd" stroke="none"/><circle cx="20.3" cy="250.5" r="1.2" fill="#ececec" stroke="none"/><circle cx="11" cy="260" r="3.5" fill="#9a9a9a"/><path d="M13.5 262.5 l5 5" stroke-width="1.8"/><circle cx="20.3" cy="268.5" r="1.2" fill="#ececec" stroke="none"/><path d="M7 286.5 l3 -7 l6 -3 l2 2 l-3 6z" fill="#c8c8c8" stroke="none"/><circle cx="20.3" cy="288.0" r="1.2" fill="#ececec" stroke="none"/><path d="M7 294.5 h11 M12.5 294.5 v11 M10.5 305.5 h4" stroke-width="1.5"/><circle cx="20.3" cy="306.0" r="1.2" fill="#ececec" stroke="none"/><path d="M9 313.5 v11 l2.5 -2.5 l2.5 4 l1.5 -1 l-2.5 -4 h4z" fill="#cfcfcf" stroke="none"/><circle cx="20.3" cy="326.0" r="1.2" fill="#ececec" stroke="none"/><path d="M7 343.5 l11 -11" stroke-width="1.4"/><circle cx="20.3" cy="344.0" r="1.2" fill="#ececec" stroke="none"/><path d="M8 358 v-5 M10.5 357 v-7 M13 357 v-7 M15.5 357 v-5 M6 357 q1 6 6 6 q5 0 6 -5 v-2" stroke-width="1.6"/><circle cx="20.3" cy="363.5" r="1.2" fill="#ececec" stroke="none"/><circle cx="11" cy="373" r="4" /><path d="M14 376 l4 4" stroke-width="2"/><rect x="4" y="386" width="4" height="4" fill="#111" stroke="#ddd" stroke-width="0.8"/><rect x="6.5" y="388.5" width="4" height="4" fill="#fff" stroke="none"/><path d="M16 386 q4 0 4 4" stroke-width="1"/><rect x="9.5" y="403.5" width="13" height="13" fill="#ffffff" stroke="#444" stroke-width="1"/><rect x="2.5" y="396.5" width="13" height="13" fill="#e6c6ac" stroke="#f2f2f2" stroke-width="1"/><rect x="6.5" y="421.5" width="12" height="10" rx="1.5" fill="#8a8a8a"/><circle cx="12.5" cy="426.5" r="3" fill="#383838" stroke="#bbb"/><rect x="8.5" y="440" width="10" height="7" /><rect x="6.5" y="443" width="10" height="7" fill="#6a6a6a"/><circle cx="20.3" cy="451.5" r="1.2" fill="#ececec" stroke="none"/></svg>
<svg width="0" height="0" style="position:absolute"><defs><symbol id="docimg" viewBox="0 0 323 442"><rect width="323" height="442" fill="#fff"/><g><path d="M168.2 21.2 L169.4 20.6 L170.8 20.5 L172.0 20.5 L173.4 20.5 L174.5 20.7 L175.7 21.0 L177.1 21.3 L178.2 21.8 L179.4 22.3 L180.7 23.0 L181.8 23.7 L183.0 24.6 L184.1 25.5 L185.0 26.5 L186.2 27.7 L187.1 29.2 L187.1 29.2 L185.9 29.6 L184.5 29.5 L183.4 29.4 L182.3 29.2 L181.0 28.9 L180.0 28.6 L178.7 28.2 L177.6 27.8 L176.5 27.2 L175.3 26.6 L174.2 26.0 L173.1 25.2 L171.8 24.4 L170.7 23.5 L169.3 22.6 L168.2 21.2Z" fill="#777777"/><path d="M177.5 30.8 L178.7 29.8 L179.9 29.1 L181.1 28.5 L182.3 28.0 L183.5 27.6 L184.7 27.2 L185.9 27.0 L187.1 26.8 L188.3 26.7 L189.5 26.6 L190.6 26.7 L191.8 26.8 L192.9 27.0 L194.1 27.3 L195.2 27.7 L196.2 28.3 L196.2 28.3 L194.8 29.1 L193.4 29.6 L192.2 30.1 L190.9 30.4 L189.7 30.8 L188.5 31.1 L187.3 31.3 L186.2 31.5 L185.0 31.6 L183.9 31.7 L182.8 31.7 L181.7 31.7 L180.7 31.6 L179.6 31.5 L178.5 31.3 L177.5 30.8Z" fill="#858585"/><path d="M171.4 27.9 L172.5 27.6 L173.9 27.3 L175.0 27.1 L176.4 26.9 L177.5 26.7 L178.9 26.5 L180.0 26.4 L181.4 26.3 L182.6 26.2 L183.9 26.2 L185.1 26.2 L186.5 26.3 L187.6 26.3 L189.0 26.5 L190.2 26.6 L191.6 26.7 L191.6 26.7 L190.1 26.7 L188.9 26.8 L187.5 26.9 L186.3 27.0 L185.0 27.0 L183.8 27.1 L182.4 27.2 L181.3 27.3 L179.9 27.4 L178.8 27.4 L177.4 27.5 L176.3 27.6 L174.9 27.6 L173.8 27.7 L172.5 27.8 L171.4 27.9Z" fill="#c8c8c8"/><circle cx="167.0" cy="26.0" r="1.5" fill="#f4f4f4" stroke="#b0b0b0" stroke-width="0.7"/><path d="M197.5 25.6 L198.8 25.4 L200.2 25.6 L201.4 25.9 L202.5 26.3 L203.6 26.8 L204.9 27.4 L206.0 28.1 L207.0 28.8 L208.0 29.7 L209.1 30.7 L210.0 31.7 L210.8 32.7 L211.6 33.9 L212.3 35.1 L213.0 36.5 L213.7 38.3 L213.7 38.3 L212.2 38.2 L211.1 37.9 L210.0 37.5 L208.9 37.0 L207.9 36.5 L206.9 35.9 L205.8 35.2 L204.8 34.4 L203.9 33.6 L203.0 32.8 L201.9 31.7 L201.0 30.7 L200.1 29.7 L199.3 28.5 L198.2 27.2 L197.5 25.6Z" fill="#777777"/><path d="M203.9 37.3 L205.4 36.7 L206.8 36.3 L207.9 36.0 L209.2 35.8 L210.5 35.7 L211.8 35.7 L213.1 35.8 L214.3 36.0 L215.5 36.2 L216.5 36.4 L217.7 36.7 L218.8 37.1 L219.9 37.6 L221.0 38.2 L221.8 38.8 L222.6 39.7 L222.6 39.7 L221.0 40.1 L219.8 40.4 L218.4 40.4 L217.0 40.5 L215.7 40.5 L214.5 40.4 L213.4 40.4 L212.2 40.3 L211.0 40.1 L209.9 39.9 L208.8 39.6 L207.7 39.3 L206.6 38.9 L205.8 38.6 L204.8 38.1 L203.9 37.3Z" fill="#858585"/><path d="M198.6 32.9 L200.0 32.9 L201.2 33.0 L202.6 33.1 L203.8 33.2 L205.0 33.3 L206.4 33.6 L207.6 33.8 L208.7 34.0 L210.1 34.3 L211.3 34.6 L212.5 34.9 L213.8 35.3 L215.0 35.7 L216.1 36.1 L217.5 36.6 L218.6 37.0 L218.6 37.0 L217.4 36.8 L215.9 36.4 L214.7 36.2 L213.5 36.0 L212.1 35.6 L210.9 35.4 L209.7 35.2 L208.4 34.9 L207.2 34.7 L206.0 34.4 L204.7 34.1 L203.5 33.9 L202.4 33.7 L201.1 33.4 L200.0 33.1 L198.6 32.9Z" fill="#c8c8c8"/><circle cx="195.2" cy="29.9" r="1.5" fill="#f4f4f4" stroke="#b0b0b0" stroke-width="0.7"/><path d="M224.6 37.4 L225.9 37.5 L227.1 38.0 L228.2 38.6 L229.3 39.3 L230.3 40.0 L231.3 40.9 L232.2 41.8 L233.0 42.8 L233.8 43.8 L234.6 45.0 L235.2 46.2 L235.9 47.4 L236.4 48.8 L236.9 50.2 L237.1 51.6 L237.2 53.4 L237.2 53.4 L235.9 53.1 L235.0 52.6 L234.0 52.0 L233.0 51.2 L232.1 50.4 L231.2 49.6 L230.4 48.7 L229.6 47.7 L228.8 46.7 L228.1 45.6 L227.4 44.4 L226.8 43.2 L226.1 41.9 L225.5 40.6 L225.0 39.1 L224.6 37.4Z" fill="#777777"/><path d="M228.1 50.3 L229.5 49.9 L231.0 49.9 L232.4 50.0 L233.6 50.1 L234.9 50.3 L236.0 50.5 L237.3 50.9 L238.5 51.4 L239.5 51.7 L240.7 52.3 L241.6 52.8 L242.7 53.5 L243.5 54.1 L244.5 54.9 L245.2 55.7 L245.9 56.8 L245.9 56.8 L244.2 56.8 L242.9 56.8 L241.4 56.5 L240.2 56.4 L238.9 56.0 L237.8 55.8 L236.6 55.4 L235.5 55.1 L234.4 54.6 L233.3 54.1 L232.4 53.7 L231.3 53.1 L230.5 52.6 L229.6 51.9 L228.6 51.2 L228.1 50.3Z" fill="#858585"/><path d="M224.1 44.8 L225.3 45.1 L226.5 45.5 L227.7 45.9 L228.8 46.3 L230.0 46.7 L231.2 47.1 L232.3 47.6 L233.7 48.3 L234.8 48.8 L236.0 49.4 L237.1 50.0 L238.2 50.6 L239.3 51.3 L240.4 51.9 L241.4 52.6 L242.5 53.3 L242.5 53.3 L241.3 52.8 L240.1 52.2 L238.9 51.7 L237.7 51.2 L236.6 50.6 L235.4 50.1 L234.2 49.6 L233.1 49.1 L231.8 48.4 L230.7 47.9 L229.5 47.4 L228.4 46.8 L227.3 46.3 L226.3 45.8 L225.2 45.3 L224.1 44.8Z" fill="#c8c8c8"/><circle cx="221.3" cy="41.0" r="1.5" fill="#f4f4f4" stroke="#b0b0b0" stroke-width="0.7"/><path d="M248.1 54.8 L249.5 55.2 L250.6 56.0 L251.6 56.9 L252.3 57.6 L253.2 58.6 L254.0 59.7 L254.8 60.8 L255.3 61.8 L255.9 63.0 L256.5 64.3 L256.8 65.5 L257.2 66.9 L257.3 68.2 L257.6 69.8 L257.8 71.4 L257.4 73.0 L257.4 73.0 L256.3 72.6 L255.3 71.8 L254.4 70.9 L253.7 70.1 L252.9 69.1 L252.3 68.2 L251.6 67.1 L251.0 65.9 L250.6 64.9 L250.0 63.7 L249.5 62.3 L249.0 61.0 L248.8 59.7 L248.5 58.2 L248.2 56.6 L248.1 54.8Z" fill="#777777"/><path d="M249.0 68.2 L250.5 68.2 L251.8 68.3 L253.2 68.8 L254.4 69.1 L255.8 69.6 L256.9 70.1 L257.9 70.6 L259.1 71.3 L260.0 71.9 L260.9 72.5 L261.8 73.2 L262.8 74.1 L263.5 74.9 L264.2 75.8 L264.8 76.7 L265.3 78.0 L265.3 78.0 L263.6 77.6 L262.3 77.3 L261.0 76.9 L259.8 76.5 L258.5 75.9 L257.5 75.4 L256.4 74.9 L255.4 74.4 L254.3 73.7 L253.5 73.1 L252.6 72.5 L251.7 71.6 L250.9 70.9 L250.0 70.0 L249.4 69.2 L249.0 68.2Z" fill="#858585"/><path d="M246.0 61.9 L247.2 62.5 L248.3 63.2 L249.5 63.8 L250.6 64.5 L251.6 65.0 L252.7 65.8 L253.8 66.5 L254.9 67.3 L255.9 68.1 L256.8 68.7 L257.8 69.6 L258.8 70.5 L259.8 71.3 L260.7 72.1 L261.6 73.0 L262.6 73.9 L262.6 73.9 L261.5 73.1 L260.4 72.3 L259.4 71.7 L258.3 70.9 L257.2 70.1 L256.1 69.3 L255.2 68.7 L254.1 68.0 L253.1 67.2 L252.0 66.4 L251.0 65.6 L250.1 65.0 L249.1 64.2 L248.1 63.4 L247.1 62.7 L246.0 61.9Z" fill="#c8c8c8"/><circle cx="244.3" cy="57.8" r="1.5" fill="#f4f4f4" stroke="#b0b0b0" stroke-width="0.7"/><path d="M267.9 76.4 L269.2 77.1 L270.0 77.9 L270.9 79.0 L271.5 79.9 L272.3 81.0 L272.8 82.1 L273.4 83.4 L273.8 84.5 L274.0 85.6 L274.4 87.1 L274.6 88.3 L274.8 89.9 L274.8 91.2 L274.7 92.6 L274.6 94.3 L274.0 95.9 L274.0 95.9 L273.0 95.3 L272.1 94.2 L271.4 93.3 L270.8 92.4 L270.2 91.2 L269.7 90.2 L269.1 89.0 L268.8 87.9 L268.5 86.7 L268.2 85.3 L268.0 84.1 L267.7 82.6 L267.7 81.3 L267.5 79.7 L267.6 78.3 L267.9 76.4Z" fill="#777777"/><path d="M266.3 89.6 L268.0 90.0 L269.3 90.5 L270.6 91.0 L271.7 91.5 L272.8 92.1 L273.9 92.8 L274.9 93.4 L275.8 94.2 L276.8 95.2 L277.6 96.0 L278.4 96.9 L279.1 97.8 L279.8 98.7 L280.3 99.7 L280.8 100.7 L281.0 101.9 L281.0 101.9 L279.5 101.5 L278.2 100.9 L277.0 100.3 L275.9 99.7 L274.8 99.0 L273.8 98.4 L272.8 97.7 L271.7 96.7 L270.8 96.0 L270.0 95.2 L269.3 94.4 L268.6 93.6 L267.9 92.7 L267.3 91.8 L266.8 90.9 L266.3 89.6Z" fill="#858585"/><path d="M264.6 82.9 L265.6 83.8 L266.7 84.7 L267.6 85.4 L268.7 86.3 L269.5 87.0 L270.6 88.0 L271.4 88.8 L272.4 89.8 L273.2 90.6 L274.1 91.6 L274.9 92.4 L275.8 93.5 L276.5 94.4 L277.4 95.5 L278.1 96.4 L279.0 97.5 L279.0 97.5 L278.0 96.5 L277.1 95.7 L276.1 94.7 L275.2 93.9 L274.2 92.9 L273.3 92.1 L272.4 91.1 L271.5 90.3 L270.6 89.3 L269.8 88.5 L268.8 87.5 L268.1 86.7 L267.2 85.7 L266.4 84.9 L265.5 83.9 L264.6 82.9Z" fill="#c8c8c8"/><circle cx="263.6" cy="78.7" r="1.5" fill="#f4f4f4" stroke="#b0b0b0" stroke-width="0.7"/><path d="M283.8 100.7 L285.0 101.7 L285.7 102.6 L286.4 103.6 L286.9 104.6 L287.5 106.0 L287.9 107.1 L288.2 108.3 L288.4 109.5 L288.7 111.0 L288.7 112.2 L288.7 113.5 L288.6 114.9 L288.4 116.3 L288.3 117.9 L287.9 119.4 L287.2 121.0 L287.2 121.0 L286.2 120.2 L285.5 119.2 L284.8 117.9 L284.4 116.9 L284.0 115.8 L283.6 114.7 L283.4 113.6 L283.0 112.1 L282.9 110.9 L282.8 109.7 L282.8 108.4 L282.7 106.8 L282.8 105.5 L283.0 104.1 L283.3 102.6 L283.8 100.7Z" fill="#777777"/><path d="M280.5 113.7 L282.0 114.2 L283.2 114.9 L284.4 115.6 L285.5 116.4 L286.5 117.1 L287.5 118.0 L288.3 118.6 L289.1 119.5 L289.9 120.4 L290.6 121.4 L291.3 122.4 L291.9 123.4 L292.4 124.5 L292.9 125.5 L293.3 126.7 L293.3 127.9 L293.3 127.9 L291.8 127.2 L290.6 126.5 L289.5 125.7 L288.4 124.9 L287.4 124.0 L286.5 123.2 L285.6 122.3 L284.7 121.4 L284.0 120.5 L283.4 119.9 L282.7 118.9 L282.1 118.0 L281.5 117.0 L281.0 116.0 L280.6 114.9 L280.5 113.7Z" fill="#858585"/><path d="M279.6 106.9 L280.5 107.7 L281.4 108.8 L282.3 109.7 L283.1 110.5 L284.0 111.7 L284.8 112.6 L285.5 113.5 L286.4 114.7 L287.1 115.6 L287.8 116.6 L288.6 117.8 L289.2 118.8 L289.8 119.8 L290.5 120.8 L291.2 122.1 L291.8 123.1 L291.8 123.1 L291.0 122.2 L290.1 121.0 L289.3 120.0 L288.6 119.1 L287.8 118.1 L286.9 117.0 L286.2 116.0 L285.5 115.1 L284.6 113.9 L283.9 113.0 L283.2 112.0 L282.4 110.8 L281.8 109.9 L281.1 109.0 L280.3 107.8 L279.6 106.9Z" fill="#c8c8c8"/><circle cx="279.2" cy="102.3" r="1.5" fill="#f4f4f4" stroke="#b0b0b0" stroke-width="0.7"/><path d="M296.2 127.1 L297.2 128.0 L297.8 129.1 L298.3 130.2 L298.8 131.3 L299.1 132.5 L299.3 133.7 L299.6 135.2 L299.7 136.4 L299.7 137.7 L299.6 139.0 L299.5 140.4 L299.2 141.7 L298.9 143.1 L298.5 144.5 L297.9 145.9 L297.0 147.5 L297.0 147.5 L296.1 146.5 L295.5 145.4 L295.1 144.3 L294.7 143.2 L294.5 142.0 L294.2 140.8 L294.1 139.6 L294.0 138.4 L294.0 137.2 L294.0 135.6 L294.1 134.3 L294.3 132.9 L294.6 131.6 L295.0 130.2 L295.4 128.7 L296.2 127.1Z" fill="#777777"/><path d="M291.2 139.4 L292.7 140.1 L293.8 141.0 L294.9 141.9 L295.8 142.5 L296.8 143.5 L297.6 144.4 L298.4 145.4 L299.2 146.5 L299.8 147.2 L300.4 148.3 L300.9 149.4 L301.4 150.6 L301.8 151.4 L302.1 152.6 L302.3 153.8 L302.3 155.1 L302.3 155.1 L300.9 154.2 L299.7 153.2 L298.7 152.3 L297.8 151.6 L296.9 150.6 L296.0 149.6 L295.3 148.6 L294.6 147.9 L293.9 146.9 L293.3 145.8 L292.7 144.8 L292.2 143.7 L291.9 142.9 L291.5 141.8 L291.2 140.6 L291.2 139.4Z" fill="#858585"/><path d="M291.3 132.5 L292.0 133.5 L292.7 134.5 L293.5 135.8 L294.3 136.8 L294.9 137.8 L295.6 138.8 L296.3 139.8 L297.0 141.2 L297.6 142.2 L298.2 143.3 L298.7 144.4 L299.3 145.5 L299.8 146.6 L300.3 147.7 L300.9 149.1 L301.4 150.3 L301.4 150.3 L300.7 149.2 L299.9 147.8 L299.3 146.8 L298.6 145.7 L297.9 144.7 L297.3 143.6 L296.7 142.6 L296.0 141.5 L295.3 140.2 L294.7 139.1 L294.2 138.1 L293.6 137.0 L293.0 135.9 L292.4 134.6 L291.8 133.6 L291.3 132.5Z" fill="#c8c8c8"/><circle cx="291.4" cy="128.0" r="1.5" fill="#f4f4f4" stroke="#b0b0b0" stroke-width="0.7"/><path d="M305.3 154.6 L306.1 155.6 L306.6 156.8 L307.0 158.0 L307.3 159.2 L307.5 160.4 L307.6 161.7 L307.7 162.9 L307.6 164.2 L307.5 165.5 L307.3 166.9 L307.0 168.2 L306.6 169.5 L306.1 170.9 L305.5 172.0 L304.8 173.4 L303.7 174.8 L303.7 174.8 L302.9 173.7 L302.4 172.6 L302.2 171.7 L302.0 170.5 L301.8 169.3 L301.7 168.1 L301.7 166.8 L301.8 165.6 L301.9 164.3 L302.1 163.0 L302.4 161.7 L302.7 160.3 L303.2 158.9 L303.7 157.6 L304.3 156.1 L305.3 154.6Z" fill="#777777"/><path d="M298.8 166.2 L300.2 167.1 L301.3 168.2 L302.2 168.9 L303.1 169.9 L303.9 171.0 L304.7 172.1 L305.3 172.9 L306.0 174.1 L306.5 175.2 L307.0 176.1 L307.4 177.3 L307.8 178.5 L308.0 179.4 L308.2 180.6 L308.3 181.9 L308.1 182.8 L308.1 182.8 L306.8 182.1 L305.8 181.0 L304.9 179.9 L304.1 179.1 L303.3 178.0 L302.5 176.9 L301.9 176.1 L301.3 175.0 L300.7 173.8 L300.2 173.0 L299.8 171.9 L299.4 170.7 L299.1 169.5 L298.9 168.7 L298.7 167.5 L298.8 166.2Z" fill="#858585"/><path d="M299.7 159.5 L300.3 160.6 L301.0 161.7 L301.6 162.8 L302.2 163.9 L302.7 165.0 L303.3 166.2 L303.8 167.3 L304.3 168.4 L304.8 169.6 L305.3 171.1 L305.8 172.2 L306.2 173.4 L306.6 174.6 L307.0 175.8 L307.4 177.0 L307.7 178.2 L307.7 178.2 L307.2 177.0 L306.6 175.8 L306.1 174.7 L305.5 173.5 L305.0 172.4 L304.4 171.2 L303.9 169.8 L303.4 168.6 L302.9 167.5 L302.4 166.4 L301.9 165.2 L301.5 164.1 L301.0 162.9 L300.6 161.8 L300.1 160.6 L299.7 159.5Z" fill="#c8c8c8"/><circle cx="300.4" cy="155.0" r="1.5" fill="#f4f4f4" stroke="#b0b0b0" stroke-width="0.7"/><path d="M311.1 183.0 L311.9 184.2 L312.3 185.4 L312.5 186.6 L312.7 187.6 L312.7 188.8 L312.7 190.1 L312.6 191.4 L312.4 192.7 L312.2 194.0 L311.8 195.3 L311.4 196.6 L310.8 197.9 L310.2 198.9 L309.5 200.3 L308.6 201.6 L307.4 202.9 L307.4 202.9 L306.7 201.8 L306.4 200.5 L306.2 199.3 L306.2 198.4 L306.1 197.2 L306.2 195.9 L306.3 194.7 L306.5 193.4 L306.8 192.1 L307.1 190.8 L307.5 189.5 L308.0 188.2 L308.6 187.2 L309.3 185.8 L310.0 184.4 L311.1 183.0Z" fill="#777777"/><path d="M303.5 193.7 L304.8 194.8 L305.7 196.0 L306.6 196.8 L307.4 198.0 L308.1 199.1 L308.7 200.0 L309.3 201.2 L309.8 202.4 L310.2 203.4 L310.6 204.6 L310.9 205.8 L311.1 206.8 L311.2 208.0 L311.3 209.3 L311.3 210.2 L311.0 211.5 L311.0 211.5 L309.8 210.3 L308.9 209.4 L308.1 208.2 L307.3 207.0 L306.7 206.1 L306.0 204.9 L305.5 203.7 L305.0 202.8 L304.6 201.6 L304.2 200.4 L303.9 199.5 L303.6 198.3 L303.4 197.1 L303.3 196.2 L303.3 195.0 L303.5 193.7Z" fill="#858585"/><path d="M305.1 187.0 L305.6 188.2 L306.1 189.4 L306.6 190.6 L307.0 191.8 L307.5 193.0 L307.9 194.2 L308.4 195.4 L308.7 196.6 L309.1 197.8 L309.4 199.0 L309.8 200.2 L310.1 201.5 L310.3 202.7 L310.6 204.0 L310.8 205.2 L311.1 206.4 L311.1 206.4 L310.7 205.2 L310.2 204.0 L309.8 202.8 L309.4 201.5 L308.9 200.3 L308.5 199.1 L308.1 197.9 L307.7 196.7 L307.4 195.5 L307.0 194.3 L306.7 193.1 L306.3 191.8 L306.0 190.6 L305.7 189.4 L305.4 188.2 L305.1 187.0Z" fill="#c8c8c8"/><circle cx="306.3" cy="182.8" r="1.5" fill="#f4f4f4" stroke="#b0b0b0" stroke-width="0.7"/><path d="M314.0 211.7 L314.6 212.9 L314.9 214.2 L315.0 215.4 L315.0 216.7 L315.0 218.0 L314.8 218.9 L314.6 220.2 L314.3 221.5 L313.9 222.8 L313.4 224.0 L312.8 225.3 L312.1 226.6 L311.4 227.5 L310.6 228.8 L309.6 230.0 L308.2 231.2 L308.2 231.2 L307.7 230.0 L307.5 228.7 L307.4 227.5 L307.4 226.6 L307.5 225.3 L307.7 224.1 L308.0 222.8 L308.3 221.6 L308.7 220.3 L309.1 219.1 L309.7 218.1 L310.3 216.8 L311.0 215.6 L311.8 214.3 L312.7 213.0 L314.0 211.7Z" fill="#777777"/><path d="M305.3 221.9 L306.4 222.8 L307.3 224.1 L308.0 225.3 L308.7 226.2 L309.3 227.5 L309.8 228.4 L310.3 229.7 L310.6 231.0 L311.0 231.9 L311.2 233.2 L311.4 234.4 L311.5 235.4 L311.5 236.7 L311.5 237.9 L311.3 238.9 L310.9 240.1 L310.9 240.1 L309.8 238.8 L309.0 237.8 L308.3 236.5 L307.7 235.3 L307.2 234.3 L306.7 233.0 L306.2 231.8 L305.8 230.9 L305.5 229.6 L305.3 228.4 L305.1 227.5 L304.9 226.2 L304.8 225.3 L304.8 224.1 L304.9 222.8 L305.3 221.9Z" fill="#858585"/><path d="M307.5 215.4 L307.9 216.6 L308.3 217.8 L308.7 219.1 L309.0 220.3 L309.3 221.6 L309.7 222.8 L309.9 224.1 L310.2 225.0 L310.4 226.3 L310.7 227.5 L310.8 228.8 L311.0 230.0 L311.2 231.3 L311.3 232.6 L311.4 233.8 L311.5 235.1 L311.5 235.1 L311.2 233.8 L310.9 232.5 L310.6 231.3 L310.3 230.0 L310.0 228.8 L309.7 227.5 L309.5 226.3 L309.2 225.0 L309.0 224.1 L308.7 222.8 L308.5 221.6 L308.3 220.3 L308.1 219.1 L307.9 217.9 L307.7 216.6 L307.5 215.4Z" fill="#c8c8c8"/><circle cx="309.1" cy="210.9" r="1.5" fill="#f4f4f4" stroke="#b0b0b0" stroke-width="0.7"/><path d="M313.9 240.6 L314.4 241.9 L314.5 243.2 L314.5 244.4 L314.4 245.7 L314.2 247.0 L314.0 247.9 L313.6 249.1 L313.2 250.4 L312.6 251.6 L312.0 252.8 L311.3 254.0 L310.5 255.2 L309.6 256.3 L308.7 257.2 L307.6 258.3 L306.1 259.4 L306.1 259.4 L305.7 258.1 L305.7 256.8 L305.7 255.9 L305.8 254.7 L306.1 253.5 L306.4 252.2 L306.7 251.0 L307.2 249.8 L307.7 248.6 L308.3 247.4 L309.0 246.5 L309.7 245.4 L310.5 244.2 L311.4 243.0 L312.5 241.8 L313.9 240.6Z" fill="#777777"/><path d="M304.2 249.9 L305.2 250.9 L305.9 252.2 L306.5 253.5 L307.1 254.5 L307.6 255.8 L308.0 257.1 L308.3 258.1 L308.6 259.4 L308.8 260.6 L308.9 261.6 L308.9 262.9 L308.9 264.1 L308.9 265.1 L308.7 266.3 L308.4 267.5 L307.9 268.4 L307.9 268.4 L306.9 267.3 L306.3 265.9 L305.7 264.6 L305.2 263.6 L304.8 262.3 L304.4 261.0 L304.1 260.0 L303.8 258.8 L303.6 257.5 L303.4 256.6 L303.4 255.3 L303.4 254.1 L303.4 253.2 L303.5 252.0 L303.7 250.7 L304.2 249.9Z" fill="#858585"/><path d="M307.1 243.6 L307.3 244.9 L307.6 246.1 L307.8 247.4 L308.0 248.7 L308.2 249.9 L308.4 251.2 L308.6 252.5 L308.7 253.7 L308.8 255.0 L308.9 256.3 L309.0 257.5 L309.0 258.8 L309.0 260.0 L309.0 261.3 L309.0 262.6 L309.0 263.8 L309.0 263.8 L308.8 262.5 L308.6 261.3 L308.5 260.0 L308.3 258.7 L308.1 257.4 L308.0 256.2 L307.8 254.9 L307.7 253.6 L307.6 252.4 L307.5 251.1 L307.4 249.9 L307.3 248.6 L307.3 247.4 L307.2 246.1 L307.1 244.9 L307.1 243.6Z" fill="#c8c8c8"/><circle cx="309.1" cy="239.4" r="1.5" fill="#f4f4f4" stroke="#b0b0b0" stroke-width="0.7"/><path d="M310.8 269.5 L311.1 270.8 L311.2 271.8 L311.0 273.0 L310.8 274.3 L310.5 275.5 L310.1 276.7 L309.6 277.9 L309.0 279.0 L308.4 280.2 L307.6 281.3 L306.8 282.4 L305.9 283.5 L304.9 284.5 L303.9 285.5 L302.7 286.5 L301.1 287.4 L301.1 287.4 L300.8 286.1 L300.9 284.9 L301.1 283.7 L301.3 282.5 L301.7 281.3 L302.1 280.2 L302.6 279.0 L303.2 277.9 L303.8 276.8 L304.5 275.6 L305.3 274.5 L306.2 273.4 L307.1 272.4 L308.1 271.3 L309.2 270.5 L310.8 269.5Z" fill="#777777"/><path d="M300.2 277.3 L301.1 278.7 L301.7 280.1 L302.1 281.4 L302.6 282.4 L302.9 283.8 L303.2 285.1 L303.4 286.1 L303.6 287.4 L303.6 288.6 L303.6 289.9 L303.6 290.8 L303.4 292.1 L303.2 293.3 L302.9 294.5 L302.6 295.3 L301.9 296.4 L301.9 296.4 L301.1 294.9 L300.5 293.8 L300.1 292.5 L299.8 291.1 L299.5 289.8 L299.2 288.8 L299.0 287.5 L298.9 286.3 L298.8 285.0 L298.8 284.1 L298.8 282.9 L298.9 281.6 L299.0 280.7 L299.3 279.6 L299.6 278.4 L300.2 277.3Z" fill="#858585"/><path d="M303.7 271.5 L303.9 272.7 L304.0 274.0 L304.1 275.3 L304.2 276.5 L304.3 277.8 L304.3 279.0 L304.3 280.6 L304.3 281.9 L304.3 283.1 L304.2 284.4 L304.1 285.6 L304.0 286.8 L303.9 288.1 L303.8 289.3 L303.7 290.5 L303.5 291.8 L303.5 291.8 L303.5 290.5 L303.4 289.2 L303.4 288.0 L303.3 286.7 L303.3 285.4 L303.3 284.2 L303.3 282.9 L303.3 281.7 L303.3 280.4 L303.4 278.9 L303.4 277.6 L303.5 276.4 L303.5 275.2 L303.6 273.9 L303.7 272.7 L303.7 271.5Z" fill="#c8c8c8"/><circle cx="306.2" cy="267.5" r="1.5" fill="#f4f4f4" stroke="#b0b0b0" stroke-width="0.7"/><path d="M304.6 297.8 L304.8 299.1 L304.7 300.4 L304.4 301.6 L304.1 302.8 L303.6 303.9 L303.1 305.0 L302.5 306.1 L301.8 307.2 L301.0 308.2 L300.2 309.2 L299.3 310.2 L298.3 311.1 L297.2 312.0 L296.0 312.9 L294.7 313.7 L293.0 314.4 L293.0 314.4 L292.9 313.1 L293.1 311.9 L293.4 310.8 L293.8 309.6 L294.3 308.5 L294.8 307.5 L295.4 306.4 L296.1 305.4 L296.9 304.4 L297.7 303.4 L298.6 302.4 L299.6 301.4 L300.6 300.5 L301.7 299.5 L303.0 298.6 L304.6 297.8Z" fill="#777777"/><path d="M293.2 304.5 L294.0 305.9 L294.4 307.3 L294.8 308.4 L295.1 309.8 L295.3 311.1 L295.4 312.4 L295.4 313.7 L295.4 314.9 L295.4 315.9 L295.3 317.1 L295.0 318.3 L294.8 319.4 L294.4 320.6 L294.0 321.7 L293.6 322.5 L292.8 323.5 L292.8 323.5 L292.2 321.9 L291.7 320.8 L291.4 319.4 L291.2 318.1 L291.1 316.8 L291.0 315.5 L291.0 314.2 L290.9 313.3 L291.0 312.1 L291.1 310.9 L291.3 309.7 L291.5 308.5 L291.8 307.4 L292.1 306.6 L292.5 305.5 L293.2 304.5Z" fill="#858585"/><path d="M297.4 298.9 L297.4 300.2 L297.3 301.7 L297.3 302.9 L297.3 304.2 L297.2 305.4 L297.1 306.7 L297.0 307.9 L296.9 309.1 L296.6 310.6 L296.5 311.8 L296.3 313.0 L296.0 314.2 L295.8 315.4 L295.4 316.8 L295.2 318.0 L294.9 319.2 L294.9 319.2 L295.0 317.9 L295.1 316.7 L295.3 315.2 L295.4 314.0 L295.5 312.7 L295.6 311.5 L295.7 310.3 L295.9 308.8 L296.1 307.6 L296.2 306.4 L296.4 305.2 L296.6 304.0 L296.8 302.8 L297.0 301.6 L297.2 300.1 L297.4 298.9Z" fill="#c8c8c8"/><circle cx="300.3" cy="295.3" r="1.5" fill="#f4f4f4" stroke="#b0b0b0" stroke-width="0.7"/><path d="M295.3 325.1 L295.4 326.5 L295.1 327.6 L294.8 328.8 L294.3 329.9 L293.6 331.2 L293.0 332.2 L292.2 333.2 L291.4 334.2 L290.6 335.1 L289.6 335.9 L288.5 337.0 L287.4 337.8 L286.2 338.5 L284.9 339.1 L283.6 339.7 L281.7 340.4 L281.7 340.4 L281.9 338.9 L282.2 337.8 L282.6 336.7 L283.1 335.7 L283.7 334.7 L284.5 333.5 L285.2 332.6 L286.0 331.7 L286.8 330.8 L287.8 329.9 L288.8 329.1 L290.0 328.0 L291.1 327.2 L292.3 326.5 L293.7 325.7 L295.3 325.1Z" fill="#777777"/><path d="M283.3 330.4 L283.8 331.9 L284.1 333.3 L284.3 334.7 L284.4 336.0 L284.4 337.3 L284.4 338.5 L284.3 339.8 L284.1 341.0 L283.9 342.2 L283.6 343.3 L283.3 344.4 L282.9 345.5 L282.4 346.6 L281.9 347.6 L281.2 348.5 L280.3 349.3 L280.3 349.3 L279.9 347.8 L279.7 346.4 L279.6 345.0 L279.6 343.7 L279.6 342.5 L279.6 341.2 L279.7 340.0 L279.9 338.8 L280.1 337.7 L280.3 336.5 L280.6 335.4 L281.0 334.3 L281.4 333.3 L281.9 332.3 L282.4 331.3 L283.3 330.4Z" fill="#858585"/><path d="M288.0 325.6 L287.9 326.8 L287.6 328.3 L287.4 329.5 L287.3 330.7 L287.1 331.8 L286.7 333.3 L286.5 334.4 L286.2 335.6 L285.8 337.0 L285.5 338.1 L285.2 339.3 L284.7 340.6 L284.3 341.7 L284.0 342.8 L283.4 344.2 L283.0 345.3 L283.0 345.3 L283.3 344.1 L283.6 342.7 L283.9 341.5 L284.1 340.3 L284.4 338.9 L284.7 337.7 L284.9 336.6 L285.3 335.2 L285.6 334.0 L285.9 332.9 L286.3 331.5 L286.6 330.4 L286.9 329.2 L287.3 328.1 L287.7 326.7 L288.0 325.6Z" fill="#c8c8c8"/><circle cx="291.3" cy="322.2" r="1.5" fill="#f4f4f4" stroke="#b0b0b0" stroke-width="0.7"/><path d="M282.7 351.3 L282.6 352.6 L282.2 353.7 L281.5 355.0 L280.9 356.0 L280.3 356.9 L279.4 358.0 L278.5 358.9 L277.6 359.6 L276.5 360.6 L275.5 361.3 L274.4 361.9 L273.1 362.7 L271.8 363.2 L270.4 363.9 L269.0 364.2 L267.3 364.4 L267.3 364.4 L267.4 363.1 L267.9 362.1 L268.6 361.0 L269.2 360.1 L270.0 359.0 L270.7 358.2 L271.6 357.4 L272.6 356.4 L273.5 355.7 L274.5 355.0 L275.7 354.2 L276.9 353.5 L278.1 352.9 L279.5 352.2 L280.9 351.6 L282.7 351.3Z" fill="#777777"/><path d="M269.9 355.0 L270.3 356.6 L270.4 357.9 L270.4 359.3 L270.4 360.5 L270.2 361.8 L269.9 363.2 L269.7 364.4 L269.4 365.5 L269.0 366.6 L268.6 367.7 L268.1 368.7 L267.4 369.9 L266.8 370.8 L266.2 371.7 L265.5 372.5 L264.3 373.3 L264.3 373.3 L264.3 371.5 L264.2 370.2 L264.3 368.9 L264.4 367.6 L264.7 366.2 L264.9 365.0 L265.2 363.9 L265.5 362.7 L265.8 361.7 L266.2 360.6 L266.7 359.4 L267.2 358.4 L267.8 357.5 L268.3 356.6 L269.0 355.7 L269.9 355.0Z" fill="#858585"/><path d="M275.4 350.7 L275.0 352.1 L274.7 353.2 L274.3 354.5 L274.0 355.7 L273.5 357.0 L273.1 358.1 L272.6 359.4 L272.2 360.5 L271.7 361.7 L271.2 362.8 L270.6 364.0 L270.1 365.0 L269.5 366.3 L269.0 367.3 L268.3 368.5 L267.6 369.7 L267.6 369.7 L268.1 368.3 L268.7 367.0 L269.0 366.0 L269.6 364.6 L269.9 363.6 L270.5 362.3 L270.8 361.2 L271.4 359.9 L271.8 358.9 L272.4 357.6 L272.8 356.6 L273.4 355.3 L273.8 354.3 L274.4 353.0 L274.8 352.0 L275.4 350.7Z" fill="#c8c8c8"/><circle cx="279.0" cy="348.0" r="1.5" fill="#f4f4f4" stroke="#b0b0b0" stroke-width="0.7"/><path d="M266.5 375.4 L266.1 376.8 L265.6 377.8 L264.8 378.9 L264.1 379.7 L263.1 380.7 L262.3 381.4 L261.2 382.3 L260.0 383.1 L259.0 383.6 L257.7 384.3 L256.6 384.7 L255.2 385.2 L253.8 385.6 L252.4 385.8 L250.9 386.1 L249.0 386.1 L249.0 386.1 L249.5 384.7 L250.2 383.7 L250.9 382.9 L251.8 382.0 L252.7 381.1 L253.5 380.5 L254.6 379.7 L255.5 379.1 L256.7 378.4 L258.0 377.7 L259.1 377.3 L260.4 376.7 L261.7 376.4 L263.2 375.9 L264.6 375.6 L266.5 375.4Z" fill="#777777"/><path d="M253.3 377.1 L253.5 378.6 L253.2 380.2 L253.1 381.4 L252.7 382.8 L252.4 384.0 L252.1 385.1 L251.5 386.4 L251.1 387.4 L250.4 388.5 L249.8 389.5 L249.2 390.3 L248.4 391.4 L247.7 392.1 L246.8 393.0 L246.0 393.6 L244.7 394.2 L244.7 394.2 L244.9 392.5 L245.1 391.2 L245.5 389.8 L245.8 388.6 L246.3 387.3 L246.7 386.2 L247.1 385.2 L247.7 384.0 L248.1 383.0 L248.8 382.0 L249.4 381.1 L249.9 380.2 L250.7 379.3 L251.4 378.5 L252.3 377.6 L253.3 377.1Z" fill="#858585"/><path d="M259.3 373.7 L258.8 375.0 L258.2 376.2 L257.8 377.2 L257.2 378.4 L256.5 379.6 L255.9 380.8 L255.4 381.8 L254.7 382.9 L254.0 384.0 L253.2 385.1 L252.5 386.2 L251.9 387.1 L251.1 388.1 L250.3 389.2 L249.4 390.2 L248.6 391.2 L248.6 391.2 L249.3 390.0 L250.0 388.9 L250.7 387.7 L251.4 386.6 L251.9 385.6 L252.6 384.5 L253.2 383.4 L253.9 382.2 L254.6 381.1 L255.2 380.2 L255.9 379.1 L256.6 378.0 L257.3 376.9 L257.9 376.0 L258.6 374.9 L259.3 373.7Z" fill="#c8c8c8"/><circle cx="263.4" cy="371.6" r="1.5" fill="#f4f4f4" stroke="#b0b0b0" stroke-width="0.7"/><path d="M246.5 396.6 L245.9 397.9 L245.1 398.9 L244.1 399.8 L243.1 400.6 L242.1 401.4 L241.2 401.9 L240.0 402.5 L238.8 403.0 L237.5 403.5 L236.2 403.8 L234.8 404.1 L233.4 404.3 L232.0 404.4 L230.5 404.5 L229.0 404.4 L227.2 403.9 L227.2 403.9 L227.9 402.8 L228.8 401.9 L229.7 401.2 L230.7 400.5 L231.7 399.9 L232.8 399.3 L233.9 398.8 L235.1 398.3 L236.3 397.9 L237.6 397.5 L238.8 397.3 L240.1 397.0 L241.6 396.8 L243.1 396.6 L244.7 396.5 L246.5 396.6Z" fill="#777777"/><path d="M233.1 396.1 L233.0 397.5 L232.6 398.9 L232.2 400.1 L231.6 401.4 L231.0 402.6 L230.5 403.6 L229.7 404.6 L228.9 405.7 L228.3 406.5 L227.4 407.4 L226.5 408.2 L225.6 409.0 L224.8 409.6 L223.7 410.2 L222.6 410.7 L221.4 411.0 L221.4 411.0 L221.9 409.4 L222.5 408.1 L223.1 406.8 L223.6 405.8 L224.3 404.6 L225.0 403.6 L225.7 402.5 L226.3 401.7 L227.1 400.7 L227.9 399.8 L228.5 399.1 L229.4 398.3 L230.3 397.5 L231.1 397.0 L232.1 396.3 L233.1 396.1Z" fill="#858585"/><path d="M239.7 393.8 L239.0 394.9 L238.3 395.9 L237.5 396.9 L236.7 398.0 L236.0 399.0 L235.2 400.0 L234.3 400.9 L233.5 401.9 L232.4 402.9 L231.6 403.8 L230.7 404.7 L229.8 405.5 L228.8 406.4 L227.9 407.2 L226.9 408.0 L226.0 408.7 L226.0 408.7 L226.8 407.8 L227.7 406.9 L228.5 405.9 L229.4 405.0 L230.2 404.0 L231.0 403.1 L231.9 402.1 L232.9 401.1 L233.8 400.1 L234.6 399.2 L235.5 398.3 L236.3 397.4 L237.2 396.5 L238.0 395.6 L238.9 394.7 L239.7 393.8Z" fill="#c8c8c8"/><circle cx="244.1" cy="392.3" r="1.5" fill="#f4f4f4" stroke="#b0b0b0" stroke-width="0.7"/><path d="M222.6 413.7 L221.8 414.9 L220.6 415.7 L219.6 416.4 L218.5 417.0 L217.3 417.4 L216.1 417.8 L214.9 418.1 L213.7 418.3 L212.4 418.5 L210.9 418.6 L209.5 418.5 L208.2 418.4 L206.8 418.1 L205.4 417.8 L203.8 417.4 L202.2 416.5 L202.2 416.5 L203.1 415.6 L204.3 414.9 L205.3 414.4 L206.4 414.0 L207.5 413.7 L208.6 413.4 L210.0 413.1 L211.2 412.9 L212.4 412.8 L213.7 412.7 L215.0 412.7 L216.3 412.8 L217.7 412.9 L219.2 413.0 L220.9 413.2 L222.6 413.7Z" fill="#777777"/><path d="M209.7 410.2 L209.1 411.8 L208.4 413.0 L207.7 414.1 L207.1 415.1 L206.2 416.1 L205.4 417.0 L204.4 417.9 L203.5 418.6 L202.5 419.4 L201.5 420.0 L200.5 420.6 L199.4 421.1 L198.3 421.5 L197.2 421.9 L196.1 422.1 L194.8 422.0 L194.8 422.0 L195.6 420.6 L196.5 419.5 L197.4 418.5 L198.3 417.5 L199.1 416.6 L200.0 415.7 L200.9 414.9 L201.9 414.1 L202.8 413.4 L203.7 412.8 L204.7 412.2 L205.7 411.6 L206.4 411.2 L207.5 410.7 L208.5 410.4 L209.7 410.2Z" fill="#858585"/><path d="M216.5 409.6 L215.7 410.4 L214.6 411.3 L213.7 412.2 L212.8 413.0 L211.6 413.8 L210.7 414.6 L209.7 415.3 L208.5 416.1 L207.5 416.8 L206.5 417.4 L205.3 418.1 L204.3 418.7 L203.2 419.3 L202.0 419.9 L200.9 420.4 L199.6 421.0 L199.6 421.0 L200.9 420.3 L201.8 419.6 L203.1 418.8 L204.0 418.1 L205.0 417.4 L206.2 416.6 L207.2 415.9 L208.1 415.2 L209.3 414.4 L210.3 413.8 L211.3 413.1 L212.5 412.3 L213.4 411.7 L214.4 411.0 L215.6 410.2 L216.5 409.6Z" fill="#c8c8c8"/><circle cx="221.1" cy="409.1" r="1.5" fill="#f4f4f4" stroke="#b0b0b0" stroke-width="0.7"/><path d="M195.2 425.1 L194.2 425.9 L193.1 426.4 L191.7 426.8 L190.5 427.1 L189.3 427.2 L187.9 427.3 L186.7 427.3 L185.5 427.2 L184.0 427.0 L182.8 426.7 L181.5 426.3 L180.1 425.8 L178.8 425.2 L177.4 424.6 L176.2 423.7 L175.0 422.5 L175.0 422.5 L176.0 421.8 L177.1 421.5 L178.4 421.3 L179.5 421.2 L180.8 421.1 L181.9 421.1 L183.1 421.2 L184.4 421.3 L185.6 421.5 L186.8 421.8 L188.2 422.1 L189.5 422.5 L190.8 422.9 L192.3 423.4 L193.7 424.1 L195.2 425.1Z" fill="#777777"/><path d="M183.7 418.4 L182.8 419.7 L181.9 420.7 L180.9 421.6 L179.9 422.4 L178.8 423.1 L177.8 423.8 L176.7 424.3 L175.6 424.8 L174.5 425.3 L173.1 425.6 L172.0 425.9 L170.9 426.1 L169.7 426.2 L168.6 426.3 L167.5 426.2 L166.3 425.8 L166.3 425.8 L167.5 424.7 L168.6 423.8 L169.7 423.0 L170.7 422.3 L171.8 421.7 L172.9 421.1 L174.2 420.5 L175.2 420.1 L176.2 419.6 L177.3 419.2 L178.3 418.9 L179.4 418.6 L180.4 418.4 L181.5 418.2 L182.6 418.2 L183.7 418.4Z" fill="#858585"/><path d="M190.4 419.4 L189.2 420.1 L188.2 420.7 L186.9 421.3 L185.9 421.8 L184.6 422.3 L183.6 422.8 L182.3 423.3 L181.2 423.7 L179.9 424.1 L178.8 424.5 L177.4 424.8 L176.3 425.1 L175.0 425.4 L173.8 425.7 L172.5 425.9 L171.3 426.1 L171.3 426.1 L172.5 425.7 L173.8 425.3 L174.9 424.9 L176.2 424.4 L177.3 424.0 L178.7 423.6 L179.7 423.2 L181.0 422.7 L182.1 422.3 L183.4 421.9 L184.5 421.5 L185.8 421.1 L186.8 420.7 L188.1 420.3 L189.2 419.9 L190.4 419.4Z" fill="#c8c8c8"/><circle cx="195.0" cy="420.1" r="1.5" fill="#f4f4f4" stroke="#b0b0b0" stroke-width="0.7"/></g><g transform="translate(334 0) scale(-1 1)"><path d="M168.2 21.2 L169.4 20.6 L170.8 20.5 L172.0 20.5 L173.4 20.5 L174.5 20.7 L175.7 21.0 L177.1 21.3 L178.2 21.8 L179.4 22.3 L180.7 23.0 L181.8 23.7 L183.0 24.6 L184.1 25.5 L185.0 26.5 L186.2 27.7 L187.1 29.2 L187.1 29.2 L185.9 29.6 L184.5 29.5 L183.4 29.4 L182.3 29.2 L181.0 28.9 L180.0 28.6 L178.7 28.2 L177.6 27.8 L176.5 27.2 L175.3 26.6 L174.2 26.0 L173.1 25.2 L171.8 24.4 L170.7 23.5 L169.3 22.6 L168.2 21.2Z" fill="#777777"/><path d="M177.5 30.8 L178.7 29.8 L179.9 29.1 L181.1 28.5 L182.3 28.0 L183.5 27.6 L184.7 27.2 L185.9 27.0 L187.1 26.8 L188.3 26.7 L189.5 26.6 L190.6 26.7 L191.8 26.8 L192.9 27.0 L194.1 27.3 L195.2 27.7 L196.2 28.3 L196.2 28.3 L194.8 29.1 L193.4 29.6 L192.2 30.1 L190.9 30.4 L189.7 30.8 L188.5 31.1 L187.3 31.3 L186.2 31.5 L185.0 31.6 L183.9 31.7 L182.8 31.7 L181.7 31.7 L180.7 31.6 L179.6 31.5 L178.5 31.3 L177.5 30.8Z" fill="#858585"/><path d="M171.4 27.9 L172.5 27.6 L173.9 27.3 L175.0 27.1 L176.4 26.9 L177.5 26.7 L178.9 26.5 L180.0 26.4 L181.4 26.3 L182.6 26.2 L183.9 26.2 L185.1 26.2 L186.5 26.3 L187.6 26.3 L189.0 26.5 L190.2 26.6 L191.6 26.7 L191.6 26.7 L190.1 26.7 L188.9 26.8 L187.5 26.9 L186.3 27.0 L185.0 27.0 L183.8 27.1 L182.4 27.2 L181.3 27.3 L179.9 27.4 L178.8 27.4 L177.4 27.5 L176.3 27.6 L174.9 27.6 L173.8 27.7 L172.5 27.8 L171.4 27.9Z" fill="#c8c8c8"/><circle cx="167.0" cy="26.0" r="1.5" fill="#f4f4f4" stroke="#b0b0b0" stroke-width="0.7"/><path d="M197.5 25.6 L198.8 25.4 L200.2 25.6 L201.4 25.9 L202.5 26.3 L203.6 26.8 L204.9 27.4 L206.0 28.1 L207.0 28.8 L208.0 29.7 L209.1 30.7 L210.0 31.7 L210.8 32.7 L211.6 33.9 L212.3 35.1 L213.0 36.5 L213.7 38.3 L213.7 38.3 L212.2 38.2 L211.1 37.9 L210.0 37.5 L208.9 37.0 L207.9 36.5 L206.9 35.9 L205.8 35.2 L204.8 34.4 L203.9 33.6 L203.0 32.8 L201.9 31.7 L201.0 30.7 L200.1 29.7 L199.3 28.5 L198.2 27.2 L197.5 25.6Z" fill="#777777"/><path d="M203.9 37.3 L205.4 36.7 L206.8 36.3 L207.9 36.0 L209.2 35.8 L210.5 35.7 L211.8 35.7 L213.1 35.8 L214.3 36.0 L215.5 36.2 L216.5 36.4 L217.7 36.7 L218.8 37.1 L219.9 37.6 L221.0 38.2 L221.8 38.8 L222.6 39.7 L222.6 39.7 L221.0 40.1 L219.8 40.4 L218.4 40.4 L217.0 40.5 L215.7 40.5 L214.5 40.4 L213.4 40.4 L212.2 40.3 L211.0 40.1 L209.9 39.9 L208.8 39.6 L207.7 39.3 L206.6 38.9 L205.8 38.6 L204.8 38.1 L203.9 37.3Z" fill="#858585"/><path d="M198.6 32.9 L200.0 32.9 L201.2 33.0 L202.6 33.1 L203.8 33.2 L205.0 33.3 L206.4 33.6 L207.6 33.8 L208.7 34.0 L210.1 34.3 L211.3 34.6 L212.5 34.9 L213.8 35.3 L215.0 35.7 L216.1 36.1 L217.5 36.6 L218.6 37.0 L218.6 37.0 L217.4 36.8 L215.9 36.4 L214.7 36.2 L213.5 36.0 L212.1 35.6 L210.9 35.4 L209.7 35.2 L208.4 34.9 L207.2 34.7 L206.0 34.4 L204.7 34.1 L203.5 33.9 L202.4 33.7 L201.1 33.4 L200.0 33.1 L198.6 32.9Z" fill="#c8c8c8"/><circle cx="195.2" cy="29.9" r="1.5" fill="#f4f4f4" stroke="#b0b0b0" stroke-width="0.7"/><path d="M224.6 37.4 L225.9 37.5 L227.1 38.0 L228.2 38.6 L229.3 39.3 L230.3 40.0 L231.3 40.9 L232.2 41.8 L233.0 42.8 L233.8 43.8 L234.6 45.0 L235.2 46.2 L235.9 47.4 L236.4 48.8 L236.9 50.2 L237.1 51.6 L237.2 53.4 L237.2 53.4 L235.9 53.1 L235.0 52.6 L234.0 52.0 L233.0 51.2 L232.1 50.4 L231.2 49.6 L230.4 48.7 L229.6 47.7 L228.8 46.7 L228.1 45.6 L227.4 44.4 L226.8 43.2 L226.1 41.9 L225.5 40.6 L225.0 39.1 L224.6 37.4Z" fill="#777777"/><path d="M228.1 50.3 L229.5 49.9 L231.0 49.9 L232.4 50.0 L233.6 50.1 L234.9 50.3 L236.0 50.5 L237.3 50.9 L238.5 51.4 L239.5 51.7 L240.7 52.3 L241.6 52.8 L242.7 53.5 L243.5 54.1 L244.5 54.9 L245.2 55.7 L245.9 56.8 L245.9 56.8 L244.2 56.8 L242.9 56.8 L241.4 56.5 L240.2 56.4 L238.9 56.0 L237.8 55.8 L236.6 55.4 L235.5 55.1 L234.4 54.6 L233.3 54.1 L232.4 53.7 L231.3 53.1 L230.5 52.6 L229.6 51.9 L228.6 51.2 L228.1 50.3Z" fill="#858585"/><path d="M224.1 44.8 L225.3 45.1 L226.5 45.5 L227.7 45.9 L228.8 46.3 L230.0 46.7 L231.2 47.1 L232.3 47.6 L233.7 48.3 L234.8 48.8 L236.0 49.4 L237.1 50.0 L238.2 50.6 L239.3 51.3 L240.4 51.9 L241.4 52.6 L242.5 53.3 L242.5 53.3 L241.3 52.8 L240.1 52.2 L238.9 51.7 L237.7 51.2 L236.6 50.6 L235.4 50.1 L234.2 49.6 L233.1 49.1 L231.8 48.4 L230.7 47.9 L229.5 47.4 L228.4 46.8 L227.3 46.3 L226.3 45.8 L225.2 45.3 L224.1 44.8Z" fill="#c8c8c8"/><circle cx="221.3" cy="41.0" r="1.5" fill="#f4f4f4" stroke="#b0b0b0" stroke-width="0.7"/><path d="M248.1 54.8 L249.5 55.2 L250.6 56.0 L251.6 56.9 L252.3 57.6 L253.2 58.6 L254.0 59.7 L254.8 60.8 L255.3 61.8 L255.9 63.0 L256.5 64.3 L256.8 65.5 L257.2 66.9 L257.3 68.2 L257.6 69.8 L257.8 71.4 L257.4 73.0 L257.4 73.0 L256.3 72.6 L255.3 71.8 L254.4 70.9 L253.7 70.1 L252.9 69.1 L252.3 68.2 L251.6 67.1 L251.0 65.9 L250.6 64.9 L250.0 63.7 L249.5 62.3 L249.0 61.0 L248.8 59.7 L248.5 58.2 L248.2 56.6 L248.1 54.8Z" fill="#777777"/><path d="M249.0 68.2 L250.5 68.2 L251.8 68.3 L253.2 68.8 L254.4 69.1 L255.8 69.6 L256.9 70.1 L257.9 70.6 L259.1 71.3 L260.0 71.9 L260.9 72.5 L261.8 73.2 L262.8 74.1 L263.5 74.9 L264.2 75.8 L264.8 76.7 L265.3 78.0 L265.3 78.0 L263.6 77.6 L262.3 77.3 L261.0 76.9 L259.8 76.5 L258.5 75.9 L257.5 75.4 L256.4 74.9 L255.4 74.4 L254.3 73.7 L253.5 73.1 L252.6 72.5 L251.7 71.6 L250.9 70.9 L250.0 70.0 L249.4 69.2 L249.0 68.2Z" fill="#858585"/><path d="M246.0 61.9 L247.2 62.5 L248.3 63.2 L249.5 63.8 L250.6 64.5 L251.6 65.0 L252.7 65.8 L253.8 66.5 L254.9 67.3 L255.9 68.1 L256.8 68.7 L257.8 69.6 L258.8 70.5 L259.8 71.3 L260.7 72.1 L261.6 73.0 L262.6 73.9 L262.6 73.9 L261.5 73.1 L260.4 72.3 L259.4 71.7 L258.3 70.9 L257.2 70.1 L256.1 69.3 L255.2 68.7 L254.1 68.0 L253.1 67.2 L252.0 66.4 L251.0 65.6 L250.1 65.0 L249.1 64.2 L248.1 63.4 L247.1 62.7 L246.0 61.9Z" fill="#c8c8c8"/><circle cx="244.3" cy="57.8" r="1.5" fill="#f4f4f4" stroke="#b0b0b0" stroke-width="0.7"/><path d="M267.9 76.4 L269.2 77.1 L270.0 77.9 L270.9 79.0 L271.5 79.9 L272.3 81.0 L272.8 82.1 L273.4 83.4 L273.8 84.5 L274.0 85.6 L274.4 87.1 L274.6 88.3 L274.8 89.9 L274.8 91.2 L274.7 92.6 L274.6 94.3 L274.0 95.9 L274.0 95.9 L273.0 95.3 L272.1 94.2 L271.4 93.3 L270.8 92.4 L270.2 91.2 L269.7 90.2 L269.1 89.0 L268.8 87.9 L268.5 86.7 L268.2 85.3 L268.0 84.1 L267.7 82.6 L267.7 81.3 L267.5 79.7 L267.6 78.3 L267.9 76.4Z" fill="#777777"/><path d="M266.3 89.6 L268.0 90.0 L269.3 90.5 L270.6 91.0 L271.7 91.5 L272.8 92.1 L273.9 92.8 L274.9 93.4 L275.8 94.2 L276.8 95.2 L277.6 96.0 L278.4 96.9 L279.1 97.8 L279.8 98.7 L280.3 99.7 L280.8 100.7 L281.0 101.9 L281.0 101.9 L279.5 101.5 L278.2 100.9 L277.0 100.3 L275.9 99.7 L274.8 99.0 L273.8 98.4 L272.8 97.7 L271.7 96.7 L270.8 96.0 L270.0 95.2 L269.3 94.4 L268.6 93.6 L267.9 92.7 L267.3 91.8 L266.8 90.9 L266.3 89.6Z" fill="#858585"/><path d="M264.6 82.9 L265.6 83.8 L266.7 84.7 L267.6 85.4 L268.7 86.3 L269.5 87.0 L270.6 88.0 L271.4 88.8 L272.4 89.8 L273.2 90.6 L274.1 91.6 L274.9 92.4 L275.8 93.5 L276.5 94.4 L277.4 95.5 L278.1 96.4 L279.0 97.5 L279.0 97.5 L278.0 96.5 L277.1 95.7 L276.1 94.7 L275.2 93.9 L274.2 92.9 L273.3 92.1 L272.4 91.1 L271.5 90.3 L270.6 89.3 L269.8 88.5 L268.8 87.5 L268.1 86.7 L267.2 85.7 L266.4 84.9 L265.5 83.9 L264.6 82.9Z" fill="#c8c8c8"/><circle cx="263.6" cy="78.7" r="1.5" fill="#f4f4f4" stroke="#b0b0b0" stroke-width="0.7"/><path d="M283.8 100.7 L285.0 101.7 L285.7 102.6 L286.4 103.6 L286.9 104.6 L287.5 106.0 L287.9 107.1 L288.2 108.3 L288.4 109.5 L288.7 111.0 L288.7 112.2 L288.7 113.5 L288.6 114.9 L288.4 116.3 L288.3 117.9 L287.9 119.4 L287.2 121.0 L287.2 121.0 L286.2 120.2 L285.5 119.2 L284.8 117.9 L284.4 116.9 L284.0 115.8 L283.6 114.7 L283.4 113.6 L283.0 112.1 L282.9 110.9 L282.8 109.7 L282.8 108.4 L282.7 106.8 L282.8 105.5 L283.0 104.1 L283.3 102.6 L283.8 100.7Z" fill="#777777"/><path d="M280.5 113.7 L282.0 114.2 L283.2 114.9 L284.4 115.6 L285.5 116.4 L286.5 117.1 L287.5 118.0 L288.3 118.6 L289.1 119.5 L289.9 120.4 L290.6 121.4 L291.3 122.4 L291.9 123.4 L292.4 124.5 L292.9 125.5 L293.3 126.7 L293.3 127.9 L293.3 127.9 L291.8 127.2 L290.6 126.5 L289.5 125.7 L288.4 124.9 L287.4 124.0 L286.5 123.2 L285.6 122.3 L284.7 121.4 L284.0 120.5 L283.4 119.9 L282.7 118.9 L282.1 118.0 L281.5 117.0 L281.0 116.0 L280.6 114.9 L280.5 113.7Z" fill="#858585"/><path d="M279.6 106.9 L280.5 107.7 L281.4 108.8 L282.3 109.7 L283.1 110.5 L284.0 111.7 L284.8 112.6 L285.5 113.5 L286.4 114.7 L287.1 115.6 L287.8 116.6 L288.6 117.8 L289.2 118.8 L289.8 119.8 L290.5 120.8 L291.2 122.1 L291.8 123.1 L291.8 123.1 L291.0 122.2 L290.1 121.0 L289.3 120.0 L288.6 119.1 L287.8 118.1 L286.9 117.0 L286.2 116.0 L285.5 115.1 L284.6 113.9 L283.9 113.0 L283.2 112.0 L282.4 110.8 L281.8 109.9 L281.1 109.0 L280.3 107.8 L279.6 106.9Z" fill="#c8c8c8"/><circle cx="279.2" cy="102.3" r="1.5" fill="#f4f4f4" stroke="#b0b0b0" stroke-width="0.7"/><path d="M296.2 127.1 L297.2 128.0 L297.8 129.1 L298.3 130.2 L298.8 131.3 L299.1 132.5 L299.3 133.7 L299.6 135.2 L299.7 136.4 L299.7 137.7 L299.6 139.0 L299.5 140.4 L299.2 141.7 L298.9 143.1 L298.5 144.5 L297.9 145.9 L297.0 147.5 L297.0 147.5 L296.1 146.5 L295.5 145.4 L295.1 144.3 L294.7 143.2 L294.5 142.0 L294.2 140.8 L294.1 139.6 L294.0 138.4 L294.0 137.2 L294.0 135.6 L294.1 134.3 L294.3 132.9 L294.6 131.6 L295.0 130.2 L295.4 128.7 L296.2 127.1Z" fill="#777777"/><path d="M291.2 139.4 L292.7 140.1 L293.8 141.0 L294.9 141.9 L295.8 142.5 L296.8 143.5 L297.6 144.4 L298.4 145.4 L299.2 146.5 L299.8 147.2 L300.4 148.3 L300.9 149.4 L301.4 150.6 L301.8 151.4 L302.1 152.6 L302.3 153.8 L302.3 155.1 L302.3 155.1 L300.9 154.2 L299.7 153.2 L298.7 152.3 L297.8 151.6 L296.9 150.6 L296.0 149.6 L295.3 148.6 L294.6 147.9 L293.9 146.9 L293.3 145.8 L292.7 144.8 L292.2 143.7 L291.9 142.9 L291.5 141.8 L291.2 140.6 L291.2 139.4Z" fill="#858585"/><path d="M291.3 132.5 L292.0 133.5 L292.7 134.5 L293.5 135.8 L294.3 136.8 L294.9 137.8 L295.6 138.8 L296.3 139.8 L297.0 141.2 L297.6 142.2 L298.2 143.3 L298.7 144.4 L299.3 145.5 L299.8 146.6 L300.3 147.7 L300.9 149.1 L301.4 150.3 L301.4 150.3 L300.7 149.2 L299.9 147.8 L299.3 146.8 L298.6 145.7 L297.9 144.7 L297.3 143.6 L296.7 142.6 L296.0 141.5 L295.3 140.2 L294.7 139.1 L294.2 138.1 L293.6 137.0 L293.0 135.9 L292.4 134.6 L291.8 133.6 L291.3 132.5Z" fill="#c8c8c8"/><circle cx="291.4" cy="128.0" r="1.5" fill="#f4f4f4" stroke="#b0b0b0" stroke-width="0.7"/><path d="M305.3 154.6 L306.1 155.6 L306.6 156.8 L307.0 158.0 L307.3 159.2 L307.5 160.4 L307.6 161.7 L307.7 162.9 L307.6 164.2 L307.5 165.5 L307.3 166.9 L307.0 168.2 L306.6 169.5 L306.1 170.9 L305.5 172.0 L304.8 173.4 L303.7 174.8 L303.7 174.8 L302.9 173.7 L302.4 172.6 L302.2 171.7 L302.0 170.5 L301.8 169.3 L301.7 168.1 L301.7 166.8 L301.8 165.6 L301.9 164.3 L302.1 163.0 L302.4 161.7 L302.7 160.3 L303.2 158.9 L303.7 157.6 L304.3 156.1 L305.3 154.6Z" fill="#777777"/><path d="M298.8 166.2 L300.2 167.1 L301.3 168.2 L302.2 168.9 L303.1 169.9 L303.9 171.0 L304.7 172.1 L305.3 172.9 L306.0 174.1 L306.5 175.2 L307.0 176.1 L307.4 177.3 L307.8 178.5 L308.0 179.4 L308.2 180.6 L308.3 181.9 L308.1 182.8 L308.1 182.8 L306.8 182.1 L305.8 181.0 L304.9 179.9 L304.1 179.1 L303.3 178.0 L302.5 176.9 L301.9 176.1 L301.3 175.0 L300.7 173.8 L300.2 173.0 L299.8 171.9 L299.4 170.7 L299.1 169.5 L298.9 168.7 L298.7 167.5 L298.8 166.2Z" fill="#858585"/><path d="M299.7 159.5 L300.3 160.6 L301.0 161.7 L301.6 162.8 L302.2 163.9 L302.7 165.0 L303.3 166.2 L303.8 167.3 L304.3 168.4 L304.8 169.6 L305.3 171.1 L305.8 172.2 L306.2 173.4 L306.6 174.6 L307.0 175.8 L307.4 177.0 L307.7 178.2 L307.7 178.2 L307.2 177.0 L306.6 175.8 L306.1 174.7 L305.5 173.5 L305.0 172.4 L304.4 171.2 L303.9 169.8 L303.4 168.6 L302.9 167.5 L302.4 166.4 L301.9 165.2 L301.5 164.1 L301.0 162.9 L300.6 161.8 L300.1 160.6 L299.7 159.5Z" fill="#c8c8c8"/><circle cx="300.4" cy="155.0" r="1.5" fill="#f4f4f4" stroke="#b0b0b0" stroke-width="0.7"/><path d="M311.1 183.0 L311.9 184.2 L312.3 185.4 L312.5 186.6 L312.7 187.6 L312.7 188.8 L312.7 190.1 L312.6 191.4 L312.4 192.7 L312.2 194.0 L311.8 195.3 L311.4 196.6 L310.8 197.9 L310.2 198.9 L309.5 200.3 L308.6 201.6 L307.4 202.9 L307.4 202.9 L306.7 201.8 L306.4 200.5 L306.2 199.3 L306.2 198.4 L306.1 197.2 L306.2 195.9 L306.3 194.7 L306.5 193.4 L306.8 192.1 L307.1 190.8 L307.5 189.5 L308.0 188.2 L308.6 187.2 L309.3 185.8 L310.0 184.4 L311.1 183.0Z" fill="#777777"/><path d="M303.5 193.7 L304.8 194.8 L305.7 196.0 L306.6 196.8 L307.4 198.0 L308.1 199.1 L308.7 200.0 L309.3 201.2 L309.8 202.4 L310.2 203.4 L310.6 204.6 L310.9 205.8 L311.1 206.8 L311.2 208.0 L311.3 209.3 L311.3 210.2 L311.0 211.5 L311.0 211.5 L309.8 210.3 L308.9 209.4 L308.1 208.2 L307.3 207.0 L306.7 206.1 L306.0 204.9 L305.5 203.7 L305.0 202.8 L304.6 201.6 L304.2 200.4 L303.9 199.5 L303.6 198.3 L303.4 197.1 L303.3 196.2 L303.3 195.0 L303.5 193.7Z" fill="#858585"/><path d="M305.1 187.0 L305.6 188.2 L306.1 189.4 L306.6 190.6 L307.0 191.8 L307.5 193.0 L307.9 194.2 L308.4 195.4 L308.7 196.6 L309.1 197.8 L309.4 199.0 L309.8 200.2 L310.1 201.5 L310.3 202.7 L310.6 204.0 L310.8 205.2 L311.1 206.4 L311.1 206.4 L310.7 205.2 L310.2 204.0 L309.8 202.8 L309.4 201.5 L308.9 200.3 L308.5 199.1 L308.1 197.9 L307.7 196.7 L307.4 195.5 L307.0 194.3 L306.7 193.1 L306.3 191.8 L306.0 190.6 L305.7 189.4 L305.4 188.2 L305.1 187.0Z" fill="#c8c8c8"/><circle cx="306.3" cy="182.8" r="1.5" fill="#f4f4f4" stroke="#b0b0b0" stroke-width="0.7"/><path d="M314.0 211.7 L314.6 212.9 L314.9 214.2 L315.0 215.4 L315.0 216.7 L315.0 218.0 L314.8 218.9 L314.6 220.2 L314.3 221.5 L313.9 222.8 L313.4 224.0 L312.8 225.3 L312.1 226.6 L311.4 227.5 L310.6 228.8 L309.6 230.0 L308.2 231.2 L308.2 231.2 L307.7 230.0 L307.5 228.7 L307.4 227.5 L307.4 226.6 L307.5 225.3 L307.7 224.1 L308.0 222.8 L308.3 221.6 L308.7 220.3 L309.1 219.1 L309.7 218.1 L310.3 216.8 L311.0 215.6 L311.8 214.3 L312.7 213.0 L314.0 211.7Z" fill="#777777"/><path d="M305.3 221.9 L306.4 222.8 L307.3 224.1 L308.0 225.3 L308.7 226.2 L309.3 227.5 L309.8 228.4 L310.3 229.7 L310.6 231.0 L311.0 231.9 L311.2 233.2 L311.4 234.4 L311.5 235.4 L311.5 236.7 L311.5 237.9 L311.3 238.9 L310.9 240.1 L310.9 240.1 L309.8 238.8 L309.0 237.8 L308.3 236.5 L307.7 235.3 L307.2 234.3 L306.7 233.0 L306.2 231.8 L305.8 230.9 L305.5 229.6 L305.3 228.4 L305.1 227.5 L304.9 226.2 L304.8 225.3 L304.8 224.1 L304.9 222.8 L305.3 221.9Z" fill="#858585"/><path d="M307.5 215.4 L307.9 216.6 L308.3 217.8 L308.7 219.1 L309.0 220.3 L309.3 221.6 L309.7 222.8 L309.9 224.1 L310.2 225.0 L310.4 226.3 L310.7 227.5 L310.8 228.8 L311.0 230.0 L311.2 231.3 L311.3 232.6 L311.4 233.8 L311.5 235.1 L311.5 235.1 L311.2 233.8 L310.9 232.5 L310.6 231.3 L310.3 230.0 L310.0 228.8 L309.7 227.5 L309.5 226.3 L309.2 225.0 L309.0 224.1 L308.7 222.8 L308.5 221.6 L308.3 220.3 L308.1 219.1 L307.9 217.9 L307.7 216.6 L307.5 215.4Z" fill="#c8c8c8"/><circle cx="309.1" cy="210.9" r="1.5" fill="#f4f4f4" stroke="#b0b0b0" stroke-width="0.7"/><path d="M313.9 240.6 L314.4 241.9 L314.5 243.2 L314.5 244.4 L314.4 245.7 L314.2 247.0 L314.0 247.9 L313.6 249.1 L313.2 250.4 L312.6 251.6 L312.0 252.8 L311.3 254.0 L310.5 255.2 L309.6 256.3 L308.7 257.2 L307.6 258.3 L306.1 259.4 L306.1 259.4 L305.7 258.1 L305.7 256.8 L305.7 255.9 L305.8 254.7 L306.1 253.5 L306.4 252.2 L306.7 251.0 L307.2 249.8 L307.7 248.6 L308.3 247.4 L309.0 246.5 L309.7 245.4 L310.5 244.2 L311.4 243.0 L312.5 241.8 L313.9 240.6Z" fill="#777777"/><path d="M304.2 249.9 L305.2 250.9 L305.9 252.2 L306.5 253.5 L307.1 254.5 L307.6 255.8 L308.0 257.1 L308.3 258.1 L308.6 259.4 L308.8 260.6 L308.9 261.6 L308.9 262.9 L308.9 264.1 L308.9 265.1 L308.7 266.3 L308.4 267.5 L307.9 268.4 L307.9 268.4 L306.9 267.3 L306.3 265.9 L305.7 264.6 L305.2 263.6 L304.8 262.3 L304.4 261.0 L304.1 260.0 L303.8 258.8 L303.6 257.5 L303.4 256.6 L303.4 255.3 L303.4 254.1 L303.4 253.2 L303.5 252.0 L303.7 250.7 L304.2 249.9Z" fill="#858585"/><path d="M307.1 243.6 L307.3 244.9 L307.6 246.1 L307.8 247.4 L308.0 248.7 L308.2 249.9 L308.4 251.2 L308.6 252.5 L308.7 253.7 L308.8 255.0 L308.9 256.3 L309.0 257.5 L309.0 258.8 L309.0 260.0 L309.0 261.3 L309.0 262.6 L309.0 263.8 L309.0 263.8 L308.8 262.5 L308.6 261.3 L308.5 260.0 L308.3 258.7 L308.1 257.4 L308.0 256.2 L307.8 254.9 L307.7 253.6 L307.6 252.4 L307.5 251.1 L307.4 249.9 L307.3 248.6 L307.3 247.4 L307.2 246.1 L307.1 244.9 L307.1 243.6Z" fill="#c8c8c8"/><circle cx="309.1" cy="239.4" r="1.5" fill="#f4f4f4" stroke="#b0b0b0" stroke-width="0.7"/><path d="M310.8 269.5 L311.1 270.8 L311.2 271.8 L311.0 273.0 L310.8 274.3 L310.5 275.5 L310.1 276.7 L309.6 277.9 L309.0 279.0 L308.4 280.2 L307.6 281.3 L306.8 282.4 L305.9 283.5 L304.9 284.5 L303.9 285.5 L302.7 286.5 L301.1 287.4 L301.1 287.4 L300.8 286.1 L300.9 284.9 L301.1 283.7 L301.3 282.5 L301.7 281.3 L302.1 280.2 L302.6 279.0 L303.2 277.9 L303.8 276.8 L304.5 275.6 L305.3 274.5 L306.2 273.4 L307.1 272.4 L308.1 271.3 L309.2 270.5 L310.8 269.5Z" fill="#777777"/><path d="M300.2 277.3 L301.1 278.7 L301.7 280.1 L302.1 281.4 L302.6 282.4 L302.9 283.8 L303.2 285.1 L303.4 286.1 L303.6 287.4 L303.6 288.6 L303.6 289.9 L303.6 290.8 L303.4 292.1 L303.2 293.3 L302.9 294.5 L302.6 295.3 L301.9 296.4 L301.9 296.4 L301.1 294.9 L300.5 293.8 L300.1 292.5 L299.8 291.1 L299.5 289.8 L299.2 288.8 L299.0 287.5 L298.9 286.3 L298.8 285.0 L298.8 284.1 L298.8 282.9 L298.9 281.6 L299.0 280.7 L299.3 279.6 L299.6 278.4 L300.2 277.3Z" fill="#858585"/><path d="M303.7 271.5 L303.9 272.7 L304.0 274.0 L304.1 275.3 L304.2 276.5 L304.3 277.8 L304.3 279.0 L304.3 280.6 L304.3 281.9 L304.3 283.1 L304.2 284.4 L304.1 285.6 L304.0 286.8 L303.9 288.1 L303.8 289.3 L303.7 290.5 L303.5 291.8 L303.5 291.8 L303.5 290.5 L303.4 289.2 L303.4 288.0 L303.3 286.7 L303.3 285.4 L303.3 284.2 L303.3 282.9 L303.3 281.7 L303.3 280.4 L303.4 278.9 L303.4 277.6 L303.5 276.4 L303.5 275.2 L303.6 273.9 L303.7 272.7 L303.7 271.5Z" fill="#c8c8c8"/><circle cx="306.2" cy="267.5" r="1.5" fill="#f4f4f4" stroke="#b0b0b0" stroke-width="0.7"/><path d="M304.6 297.8 L304.8 299.1 L304.7 300.4 L304.4 301.6 L304.1 302.8 L303.6 303.9 L303.1 305.0 L302.5 306.1 L301.8 307.2 L301.0 308.2 L300.2 309.2 L299.3 310.2 L298.3 311.1 L297.2 312.0 L296.0 312.9 L294.7 313.7 L293.0 314.4 L293.0 314.4 L292.9 313.1 L293.1 311.9 L293.4 310.8 L293.8 309.6 L294.3 308.5 L294.8 307.5 L295.4 306.4 L296.1 305.4 L296.9 304.4 L297.7 303.4 L298.6 302.4 L299.6 301.4 L300.6 300.5 L301.7 299.5 L303.0 298.6 L304.6 297.8Z" fill="#777777"/><path d="M293.2 304.5 L294.0 305.9 L294.4 307.3 L294.8 308.4 L295.1 309.8 L295.3 311.1 L295.4 312.4 L295.4 313.7 L295.4 314.9 L295.4 315.9 L295.3 317.1 L295.0 318.3 L294.8 319.4 L294.4 320.6 L294.0 321.7 L293.6 322.5 L292.8 323.5 L292.8 323.5 L292.2 321.9 L291.7 320.8 L291.4 319.4 L291.2 318.1 L291.1 316.8 L291.0 315.5 L291.0 314.2 L290.9 313.3 L291.0 312.1 L291.1 310.9 L291.3 309.7 L291.5 308.5 L291.8 307.4 L292.1 306.6 L292.5 305.5 L293.2 304.5Z" fill="#858585"/><path d="M297.4 298.9 L297.4 300.2 L297.3 301.7 L297.3 302.9 L297.3 304.2 L297.2 305.4 L297.1 306.7 L297.0 307.9 L296.9 309.1 L296.6 310.6 L296.5 311.8 L296.3 313.0 L296.0 314.2 L295.8 315.4 L295.4 316.8 L295.2 318.0 L294.9 319.2 L294.9 319.2 L295.0 317.9 L295.1 316.7 L295.3 315.2 L295.4 314.0 L295.5 312.7 L295.6 311.5 L295.7 310.3 L295.9 308.8 L296.1 307.6 L296.2 306.4 L296.4 305.2 L296.6 304.0 L296.8 302.8 L297.0 301.6 L297.2 300.1 L297.4 298.9Z" fill="#c8c8c8"/><circle cx="300.3" cy="295.3" r="1.5" fill="#f4f4f4" stroke="#b0b0b0" stroke-width="0.7"/><path d="M295.3 325.1 L295.4 326.5 L295.1 327.6 L294.8 328.8 L294.3 329.9 L293.6 331.2 L293.0 332.2 L292.2 333.2 L291.4 334.2 L290.6 335.1 L289.6 335.9 L288.5 337.0 L287.4 337.8 L286.2 338.5 L284.9 339.1 L283.6 339.7 L281.7 340.4 L281.7 340.4 L281.9 338.9 L282.2 337.8 L282.6 336.7 L283.1 335.7 L283.7 334.7 L284.5 333.5 L285.2 332.6 L286.0 331.7 L286.8 330.8 L287.8 329.9 L288.8 329.1 L290.0 328.0 L291.1 327.2 L292.3 326.5 L293.7 325.7 L295.3 325.1Z" fill="#777777"/><path d="M283.3 330.4 L283.8 331.9 L284.1 333.3 L284.3 334.7 L284.4 336.0 L284.4 337.3 L284.4 338.5 L284.3 339.8 L284.1 341.0 L283.9 342.2 L283.6 343.3 L283.3 344.4 L282.9 345.5 L282.4 346.6 L281.9 347.6 L281.2 348.5 L280.3 349.3 L280.3 349.3 L279.9 347.8 L279.7 346.4 L279.6 345.0 L279.6 343.7 L279.6 342.5 L279.6 341.2 L279.7 340.0 L279.9 338.8 L280.1 337.7 L280.3 336.5 L280.6 335.4 L281.0 334.3 L281.4 333.3 L281.9 332.3 L282.4 331.3 L283.3 330.4Z" fill="#858585"/><path d="M288.0 325.6 L287.9 326.8 L287.6 328.3 L287.4 329.5 L287.3 330.7 L287.1 331.8 L286.7 333.3 L286.5 334.4 L286.2 335.6 L285.8 337.0 L285.5 338.1 L285.2 339.3 L284.7 340.6 L284.3 341.7 L284.0 342.8 L283.4 344.2 L283.0 345.3 L283.0 345.3 L283.3 344.1 L283.6 342.7 L283.9 341.5 L284.1 340.3 L284.4 338.9 L284.7 337.7 L284.9 336.6 L285.3 335.2 L285.6 334.0 L285.9 332.9 L286.3 331.5 L286.6 330.4 L286.9 329.2 L287.3 328.1 L287.7 326.7 L288.0 325.6Z" fill="#c8c8c8"/><circle cx="291.3" cy="322.2" r="1.5" fill="#f4f4f4" stroke="#b0b0b0" stroke-width="0.7"/><path d="M282.7 351.3 L282.6 352.6 L282.2 353.7 L281.5 355.0 L280.9 356.0 L280.3 356.9 L279.4 358.0 L278.5 358.9 L277.6 359.6 L276.5 360.6 L275.5 361.3 L274.4 361.9 L273.1 362.7 L271.8 363.2 L270.4 363.9 L269.0 364.2 L267.3 364.4 L267.3 364.4 L267.4 363.1 L267.9 362.1 L268.6 361.0 L269.2 360.1 L270.0 359.0 L270.7 358.2 L271.6 357.4 L272.6 356.4 L273.5 355.7 L274.5 355.0 L275.7 354.2 L276.9 353.5 L278.1 352.9 L279.5 352.2 L280.9 351.6 L282.7 351.3Z" fill="#777777"/><path d="M269.9 355.0 L270.3 356.6 L270.4 357.9 L270.4 359.3 L270.4 360.5 L270.2 361.8 L269.9 363.2 L269.7 364.4 L269.4 365.5 L269.0 366.6 L268.6 367.7 L268.1 368.7 L267.4 369.9 L266.8 370.8 L266.2 371.7 L265.5 372.5 L264.3 373.3 L264.3 373.3 L264.3 371.5 L264.2 370.2 L264.3 368.9 L264.4 367.6 L264.7 366.2 L264.9 365.0 L265.2 363.9 L265.5 362.7 L265.8 361.7 L266.2 360.6 L266.7 359.4 L267.2 358.4 L267.8 357.5 L268.3 356.6 L269.0 355.7 L269.9 355.0Z" fill="#858585"/><path d="M275.4 350.7 L275.0 352.1 L274.7 353.2 L274.3 354.5 L274.0 355.7 L273.5 357.0 L273.1 358.1 L272.6 359.4 L272.2 360.5 L271.7 361.7 L271.2 362.8 L270.6 364.0 L270.1 365.0 L269.5 366.3 L269.0 367.3 L268.3 368.5 L267.6 369.7 L267.6 369.7 L268.1 368.3 L268.7 367.0 L269.0 366.0 L269.6 364.6 L269.9 363.6 L270.5 362.3 L270.8 361.2 L271.4 359.9 L271.8 358.9 L272.4 357.6 L272.8 356.6 L273.4 355.3 L273.8 354.3 L274.4 353.0 L274.8 352.0 L275.4 350.7Z" fill="#c8c8c8"/><circle cx="279.0" cy="348.0" r="1.5" fill="#f4f4f4" stroke="#b0b0b0" stroke-width="0.7"/><path d="M266.5 375.4 L266.1 376.8 L265.6 377.8 L264.8 378.9 L264.1 379.7 L263.1 380.7 L262.3 381.4 L261.2 382.3 L260.0 383.1 L259.0 383.6 L257.7 384.3 L256.6 384.7 L255.2 385.2 L253.8 385.6 L252.4 385.8 L250.9 386.1 L249.0 386.1 L249.0 386.1 L249.5 384.7 L250.2 383.7 L250.9 382.9 L251.8 382.0 L252.7 381.1 L253.5 380.5 L254.6 379.7 L255.5 379.1 L256.7 378.4 L258.0 377.7 L259.1 377.3 L260.4 376.7 L261.7 376.4 L263.2 375.9 L264.6 375.6 L266.5 375.4Z" fill="#777777"/><path d="M253.3 377.1 L253.5 378.6 L253.2 380.2 L253.1 381.4 L252.7 382.8 L252.4 384.0 L252.1 385.1 L251.5 386.4 L251.1 387.4 L250.4 388.5 L249.8 389.5 L249.2 390.3 L248.4 391.4 L247.7 392.1 L246.8 393.0 L246.0 393.6 L244.7 394.2 L244.7 394.2 L244.9 392.5 L245.1 391.2 L245.5 389.8 L245.8 388.6 L246.3 387.3 L246.7 386.2 L247.1 385.2 L247.7 384.0 L248.1 383.0 L248.8 382.0 L249.4 381.1 L249.9 380.2 L250.7 379.3 L251.4 378.5 L252.3 377.6 L253.3 377.1Z" fill="#858585"/><path d="M259.3 373.7 L258.8 375.0 L258.2 376.2 L257.8 377.2 L257.2 378.4 L256.5 379.6 L255.9 380.8 L255.4 381.8 L254.7 382.9 L254.0 384.0 L253.2 385.1 L252.5 386.2 L251.9 387.1 L251.1 388.1 L250.3 389.2 L249.4 390.2 L248.6 391.2 L248.6 391.2 L249.3 390.0 L250.0 388.9 L250.7 387.7 L251.4 386.6 L251.9 385.6 L252.6 384.5 L253.2 383.4 L253.9 382.2 L254.6 381.1 L255.2 380.2 L255.9 379.1 L256.6 378.0 L257.3 376.9 L257.9 376.0 L258.6 374.9 L259.3 373.7Z" fill="#c8c8c8"/><circle cx="263.4" cy="371.6" r="1.5" fill="#f4f4f4" stroke="#b0b0b0" stroke-width="0.7"/><path d="M246.5 396.6 L245.9 397.9 L245.1 398.9 L244.1 399.8 L243.1 400.6 L242.1 401.4 L241.2 401.9 L240.0 402.5 L238.8 403.0 L237.5 403.5 L236.2 403.8 L234.8 404.1 L233.4 404.3 L232.0 404.4 L230.5 404.5 L229.0 404.4 L227.2 403.9 L227.2 403.9 L227.9 402.8 L228.8 401.9 L229.7 401.2 L230.7 400.5 L231.7 399.9 L232.8 399.3 L233.9 398.8 L235.1 398.3 L236.3 397.9 L237.6 397.5 L238.8 397.3 L240.1 397.0 L241.6 396.8 L243.1 396.6 L244.7 396.5 L246.5 396.6Z" fill="#777777"/><path d="M233.1 396.1 L233.0 397.5 L232.6 398.9 L232.2 400.1 L231.6 401.4 L231.0 402.6 L230.5 403.6 L229.7 404.6 L228.9 405.7 L228.3 406.5 L227.4 407.4 L226.5 408.2 L225.6 409.0 L224.8 409.6 L223.7 410.2 L222.6 410.7 L221.4 411.0 L221.4 411.0 L221.9 409.4 L222.5 408.1 L223.1 406.8 L223.6 405.8 L224.3 404.6 L225.0 403.6 L225.7 402.5 L226.3 401.7 L227.1 400.7 L227.9 399.8 L228.5 399.1 L229.4 398.3 L230.3 397.5 L231.1 397.0 L232.1 396.3 L233.1 396.1Z" fill="#858585"/><path d="M239.7 393.8 L239.0 394.9 L238.3 395.9 L237.5 396.9 L236.7 398.0 L236.0 399.0 L235.2 400.0 L234.3 400.9 L233.5 401.9 L232.4 402.9 L231.6 403.8 L230.7 404.7 L229.8 405.5 L228.8 406.4 L227.9 407.2 L226.9 408.0 L226.0 408.7 L226.0 408.7 L226.8 407.8 L227.7 406.9 L228.5 405.9 L229.4 405.0 L230.2 404.0 L231.0 403.1 L231.9 402.1 L232.9 401.1 L233.8 400.1 L234.6 399.2 L235.5 398.3 L236.3 397.4 L237.2 396.5 L238.0 395.6 L238.9 394.7 L239.7 393.8Z" fill="#c8c8c8"/><circle cx="244.1" cy="392.3" r="1.5" fill="#f4f4f4" stroke="#b0b0b0" stroke-width="0.7"/><path d="M222.6 413.7 L221.8 414.9 L220.6 415.7 L219.6 416.4 L218.5 417.0 L217.3 417.4 L216.1 417.8 L214.9 418.1 L213.7 418.3 L212.4 418.5 L210.9 418.6 L209.5 418.5 L208.2 418.4 L206.8 418.1 L205.4 417.8 L203.8 417.4 L202.2 416.5 L202.2 416.5 L203.1 415.6 L204.3 414.9 L205.3 414.4 L206.4 414.0 L207.5 413.7 L208.6 413.4 L210.0 413.1 L211.2 412.9 L212.4 412.8 L213.7 412.7 L215.0 412.7 L216.3 412.8 L217.7 412.9 L219.2 413.0 L220.9 413.2 L222.6 413.7Z" fill="#777777"/><path d="M209.7 410.2 L209.1 411.8 L208.4 413.0 L207.7 414.1 L207.1 415.1 L206.2 416.1 L205.4 417.0 L204.4 417.9 L203.5 418.6 L202.5 419.4 L201.5 420.0 L200.5 420.6 L199.4 421.1 L198.3 421.5 L197.2 421.9 L196.1 422.1 L194.8 422.0 L194.8 422.0 L195.6 420.6 L196.5 419.5 L197.4 418.5 L198.3 417.5 L199.1 416.6 L200.0 415.7 L200.9 414.9 L201.9 414.1 L202.8 413.4 L203.7 412.8 L204.7 412.2 L205.7 411.6 L206.4 411.2 L207.5 410.7 L208.5 410.4 L209.7 410.2Z" fill="#858585"/><path d="M216.5 409.6 L215.7 410.4 L214.6 411.3 L213.7 412.2 L212.8 413.0 L211.6 413.8 L210.7 414.6 L209.7 415.3 L208.5 416.1 L207.5 416.8 L206.5 417.4 L205.3 418.1 L204.3 418.7 L203.2 419.3 L202.0 419.9 L200.9 420.4 L199.6 421.0 L199.6 421.0 L200.9 420.3 L201.8 419.6 L203.1 418.8 L204.0 418.1 L205.0 417.4 L206.2 416.6 L207.2 415.9 L208.1 415.2 L209.3 414.4 L210.3 413.8 L211.3 413.1 L212.5 412.3 L213.4 411.7 L214.4 411.0 L215.6 410.2 L216.5 409.6Z" fill="#c8c8c8"/><circle cx="221.1" cy="409.1" r="1.5" fill="#f4f4f4" stroke="#b0b0b0" stroke-width="0.7"/><path d="M195.2 425.1 L194.2 425.9 L193.1 426.4 L191.7 426.8 L190.5 427.1 L189.3 427.2 L187.9 427.3 L186.7 427.3 L185.5 427.2 L184.0 427.0 L182.8 426.7 L181.5 426.3 L180.1 425.8 L178.8 425.2 L177.4 424.6 L176.2 423.7 L175.0 422.5 L175.0 422.5 L176.0 421.8 L177.1 421.5 L178.4 421.3 L179.5 421.2 L180.8 421.1 L181.9 421.1 L183.1 421.2 L184.4 421.3 L185.6 421.5 L186.8 421.8 L188.2 422.1 L189.5 422.5 L190.8 422.9 L192.3 423.4 L193.7 424.1 L195.2 425.1Z" fill="#777777"/><path d="M183.7 418.4 L182.8 419.7 L181.9 420.7 L180.9 421.6 L179.9 422.4 L178.8 423.1 L177.8 423.8 L176.7 424.3 L175.6 424.8 L174.5 425.3 L173.1 425.6 L172.0 425.9 L170.9 426.1 L169.7 426.2 L168.6 426.3 L167.5 426.2 L166.3 425.8 L166.3 425.8 L167.5 424.7 L168.6 423.8 L169.7 423.0 L170.7 422.3 L171.8 421.7 L172.9 421.1 L174.2 420.5 L175.2 420.1 L176.2 419.6 L177.3 419.2 L178.3 418.9 L179.4 418.6 L180.4 418.4 L181.5 418.2 L182.6 418.2 L183.7 418.4Z" fill="#858585"/><path d="M190.4 419.4 L189.2 420.1 L188.2 420.7 L186.9 421.3 L185.9 421.8 L184.6 422.3 L183.6 422.8 L182.3 423.3 L181.2 423.7 L179.9 424.1 L178.8 424.5 L177.4 424.8 L176.3 425.1 L175.0 425.4 L173.8 425.7 L172.5 425.9 L171.3 426.1 L171.3 426.1 L172.5 425.7 L173.8 425.3 L174.9 424.9 L176.2 424.4 L177.3 424.0 L178.7 423.6 L179.7 423.2 L181.0 422.7 L182.1 422.3 L183.4 421.9 L184.5 421.5 L185.8 421.1 L186.8 420.7 L188.1 420.3 L189.2 419.9 L190.4 419.4Z" fill="#c8c8c8"/><circle cx="195.0" cy="420.1" r="1.5" fill="#f4f4f4" stroke="#b0b0b0" stroke-width="0.7"/></g><g transform="rotate(0.5 165.3 277.6)"><rect x="119.50" y="162.90" width="15.68" height="57.73" fill="#f1f0fa"/><text x="0" y="0" transform="translate(129.64 191.56) rotate(-90)" text-anchor="middle" font-size="6.9" font-weight="bold" fill="#5a5a5a" font-family="Liberation Sans" textLength="25.9" lengthAdjust="spacingAndGlyphs">бежевый</text><rect x="119.50" y="220.23" width="15.68" height="57.73" fill="#ffffff"/><text x="0" y="0" transform="translate(129.64 248.90) rotate(-90)" text-anchor="middle" font-size="6.9" font-weight="bold" fill="#8a8a8a" font-family="Liberation Sans" textLength="18.5" lengthAdjust="spacingAndGlyphs">белый</text><rect x="119.50" y="277.56" width="15.68" height="57.73" fill="#c6c6c6"/><text x="0" y="0" transform="translate(129.64 306.23) rotate(-90)" text-anchor="middle" font-size="6.9" font-weight="bold" fill="#efefef" font-family="Liberation Sans" textLength="40.7" lengthAdjust="spacingAndGlyphs">темно-серый</text><rect x="119.50" y="334.89" width="15.68" height="57.73" fill="#20d0f0"/><text x="0" y="0" transform="translate(129.64 363.56) rotate(-90)" text-anchor="middle" font-size="6.9" font-weight="bold" fill="#ffffff" font-family="Liberation Sans" textLength="25.9" lengthAdjust="spacingAndGlyphs">красный</text><rect x="134.78" y="162.90" width="15.68" height="57.73" fill="#3f4550"/><text x="0" y="0" transform="translate(144.92 191.56) rotate(-90)" text-anchor="middle" font-size="6.9" font-weight="bold" fill="#ffffff" font-family="Liberation Sans" textLength="22.2" lengthAdjust="spacingAndGlyphs">черный</text><rect x="134.78" y="220.23" width="15.68" height="57.73" fill="#c03a6a"/><text x="0" y="0" transform="translate(144.92 248.90) rotate(-90)" text-anchor="middle" font-size="6.9" font-weight="bold" fill="#ffffff" font-family="Liberation Sans" textLength="48.1" lengthAdjust="spacingAndGlyphs">темно-зеленый</text><rect x="134.78" y="277.56" width="15.68" height="57.73" fill="#ffffff"/><text x="0" y="0" transform="translate(144.92 306.23) rotate(-90)" text-anchor="middle" font-size="6.9" font-weight="bold" fill="#555555" font-family="Liberation Sans" textLength="44.4" lengthAdjust="spacingAndGlyphs">светло-серый</text><rect x="134.78" y="334.89" width="15.68" height="57.73" fill="#f83a30"/><text x="0" y="0" transform="translate(144.92 363.56) rotate(-90)" text-anchor="middle" font-size="6.9" font-weight="bold" fill="#ff8070" font-family="Liberation Sans" textLength="25.9" lengthAdjust="spacingAndGlyphs">зеленый</text><rect x="150.06" y="162.90" width="15.68" height="57.73" fill="#f48a48"/><text x="0" y="0" transform="translate(160.20 191.56) rotate(-90)" text-anchor="middle" font-size="6.9" font-weight="bold" fill="#ffffff" font-family="Liberation Sans" textLength="40.7" lengthAdjust="spacingAndGlyphs">темно-синий</text><rect x="150.06" y="220.23" width="15.68" height="57.73" fill="#14e044"/><text x="0" y="0" transform="translate(160.20 248.90) rotate(-90)" text-anchor="middle" font-size="6.9" font-weight="bold" fill="#ffffff" font-family="Liberation Sans" textLength="37.0" lengthAdjust="spacingAndGlyphs">фиолетовый</text><rect x="150.06" y="277.56" width="15.68" height="57.73" fill="#1ee85e"/><text x="0" y="0" transform="translate(160.20 306.23) rotate(-90)" text-anchor="middle" font-size="6.9" font-weight="bold" fill="#ffffff" font-family="Liberation Sans" textLength="25.9" lengthAdjust="spacingAndGlyphs">голубой</text><rect x="150.06" y="334.89" width="15.68" height="57.73" fill="#f83882"/><text x="0" y="0" transform="translate(160.20 363.56) rotate(-90)" text-anchor="middle" font-size="6.9" font-weight="bold" fill="#ffffff" font-family="Liberation Sans" textLength="14.8" lengthAdjust="spacingAndGlyphs">туша</text><rect x="165.34" y="162.90" width="15.68" height="57.73" fill="#fde2d6"/><text x="0" y="0" transform="translate(175.48 191.56) rotate(-90)" text-anchor="middle" font-size="6.9" font-weight="bold" fill="#fff8e0" font-family="Liberation Sans" textLength="51.8" lengthAdjust="spacingAndGlyphs">светло-розовый</text><rect x="165.34" y="220.23" width="15.68" height="57.73" fill="#12d0f0"/><text x="0" y="0" transform="translate(175.48 248.90) rotate(-90)" text-anchor="middle" font-size="6.9" font-weight="bold" fill="#ffffff" font-family="Liberation Sans" textLength="29.6" lengthAdjust="spacingAndGlyphs">бордовый</text><rect x="165.34" y="277.56" width="15.68" height="57.73" fill="#f7a452"/><text x="0" y="0" transform="translate(175.48 306.23) rotate(-90)" text-anchor="middle" font-size="6.9" font-weight="bold" fill="#ffffff" font-family="Liberation Sans" textLength="29.6" lengthAdjust="spacingAndGlyphs">розо-бро</text><rect x="165.34" y="334.89" width="15.68" height="57.73" fill="#7a6ae8"/><text x="0" y="0" transform="translate(175.48 363.56) rotate(-90)" text-anchor="middle" font-size="6.9" font-weight="bold" fill="#3c3c6a" font-family="Liberation Sans" textLength="29.6" lengthAdjust="spacingAndGlyphs">салатный</text><rect x="180.62" y="162.90" width="15.68" height="57.73" fill="#cfcbf0"/><text x="0" y="0" transform="translate(190.76 191.56) rotate(-90)" text-anchor="middle" font-size="6.9" font-weight="bold" fill="#555566" font-family="Liberation Sans" textLength="33.3" lengthAdjust="spacingAndGlyphs">оливковый</text><rect x="180.62" y="220.23" width="15.68" height="57.73" fill="#3434f0"/><text x="0" y="0" transform="translate(190.76 248.90) rotate(-90)" text-anchor="middle" font-size="6.9" font-weight="bold" fill="#7d7df5" font-family="Liberation Sans" textLength="18.5" lengthAdjust="spacingAndGlyphs">синий</text><rect x="180.62" y="277.56" width="15.68" height="57.73" fill="#7e8ed2"/><text x="0" y="0" transform="translate(190.76 306.23) rotate(-90)" text-anchor="middle" font-size="6.9" font-weight="bold" fill="#333344" font-family="Liberation Sans" textLength="37.0" lengthAdjust="spacingAndGlyphs">коричневый</text><rect x="180.62" y="334.89" width="15.68" height="57.73" fill="#3d3df0"/><text x="0" y="0" transform="translate(190.76 363.56) rotate(-90)" text-anchor="middle" font-size="6.9" font-weight="bold" fill="#6f7ff8" font-family="Liberation Sans" textLength="25.9" lengthAdjust="spacingAndGlyphs">голубой</text><rect x="195.90" y="162.90" width="15.68" height="57.73" fill="#b8f4d0"/><text x="0" y="0" transform="translate(206.04 191.56) rotate(-90)" text-anchor="middle" font-size="6.9" font-weight="bold" fill="#3a5a4a" font-family="Liberation Sans" textLength="25.9" lengthAdjust="spacingAndGlyphs">розовый</text><rect x="195.90" y="220.23" width="15.68" height="57.73" fill="#98a8e8"/><text x="0" y="0" transform="translate(206.04 248.90) rotate(-90)" text-anchor="middle" font-size="6.9" font-weight="bold" fill="#3a3a55" font-family="Liberation Sans" textLength="52.0" lengthAdjust="spacingAndGlyphs">светло-коричневый</text><rect x="195.90" y="277.56" width="15.68" height="57.73" fill="#e8eaf7"/><text x="0" y="0" transform="translate(206.04 306.23) rotate(-90)" text-anchor="middle" font-size="6.9" font-weight="bold" fill="#555566" font-family="Liberation Sans" textLength="29.6" lengthAdjust="spacingAndGlyphs">песочный</text><rect x="195.90" y="334.89" width="15.68" height="57.73" fill="#2070f0"/><text x="0" y="0" transform="translate(206.04 363.56) rotate(-90)" text-anchor="middle" font-size="6.9" font-weight="bold" fill="#ffffff" font-family="Liberation Sans" textLength="33.3" lengthAdjust="spacingAndGlyphs">оранжевый</text></g></symbol></defs></svg>
<svg class="a" style="left:143px;top:117px" width="323" height="442"><use href="#docimg"/></svg>
<div class="a" style="left:28px;top:240px;width:325px;height:1px;background:#c8c8c8;mix-blend-mode:difference"></div>
<div class="a" style="left:352px;top:58px;width:1px;height:182px;background:#c8c8c8;mix-blend-mode:difference"></div>
<div class="a" style="left:584px;top:45px;width:316px;height:7px;background:#303030;"></div>
<div class="a" style="left:584px;top:52px;width:316px;height:12px;background:#3c3c3c;"></div>
<div class="a" style="left:584px;top:52px;width:44px;height:12px;background:#464646;"></div>
<div class="a" style="left:628px;top:52px;width:55px;height:12px;background:#464646;"></div>
<div class="a" style="left:683px;top:52px;width:45px;height:12px;background:#535353;"></div>
<div class="a" style="left:728px;top:52px;width:30px;height:12px;background:#464646;"></div>
<div class="a" style="left:627px;top:52px;width:1px;height:12px;background:#393939;"></div>
<div class="a" style="left:682px;top:52px;width:1px;height:12px;background:#393939;"></div>
<div class="a" style="left:728px;top:52px;width:1px;height:12px;background:#393939;"></div>
<div class="a" style="left:758px;top:52px;width:1px;height:12px;background:#393939;"></div>
<div class="a" style="left:648px;top:68px;width:184px;height:251px;background:#b85a5a;"></div>
<svg class="a" style="left:650px;top:70px" width="180" height="247" viewBox="0 0 323 442" preserveAspectRatio="none"><use href="#docimg"/></svg>
<div class="a" style="left:584px;top:320px;width:316px;height:15px;background:#4a4a4a;"></div>
<div class="a" style="left:643px;top:325px;width:222px;height:2px;background:#303030;"></div>
<div class="a" style="left:643px;top:327px;width:222px;height:1px;background:#606060;"></div>
<svg class="a" style="left:726px;top:322px" width="9" height="7"><path d="M4.5 0 L8.5 6 L0.5 6Z" fill="#d0d0d0"/></svg>
<svg class="a" style="left:869px;top:322px" width="15" height="8"><path d="M1 7 L5 2 L7.5 4.5 L10 1 L14 7Z" fill="#b8b8b8"/></svg>
<div class="a" style="left:584px;top:348px;width:303px;height:258px;background:#5b6579;"></div>
<div class="a" style="left:584px;top:392px;width:303px;height:2px;background:#414858;"></div>
<svg class="a" style="left:587px;top:360px" width="10" height="8"><path d="M0.5 4 Q5 -0.5 9.5 4 Q5 8.5 0.5 4Z" fill="#cfd4dc"/><circle cx="5" cy="4" r="1.6" fill="#3a4050"/></svg>
<div class="a" style="left:601px;top:337px;width:42px;height:56px;background:#2e3440;"></div>
<svg class="a" style="left:602px;top:337px;" width="40" height="54" viewBox="0 0 323 442" preserveAspectRatio="none"><use href="#docimg"/></svg>
<div class="a" style="left:584px;top:451px;width:303px;height:2px;background:#414858;"></div>
<svg class="a" style="left:587px;top:419px" width="10" height="8"><path d="M0.5 4 Q5 -0.5 9.5 4 Q5 8.5 0.5 4Z" fill="#cfd4dc"/><circle cx="5" cy="4" r="1.6" fill="#3a4050"/></svg>
<div class="a" style="left:601px;top:396px;width:42px;height:56px;background:#2e3440;"></div>
<svg class="a" style="left:602px;top:396px;filter:grayscale(1) contrast(1.4);" width="40" height="54" viewBox="0 0 323 442" preserveAspectRatio="none"><use href="#docimg"/></svg>
<div class="a" style="left:584px;top:510px;width:303px;height:2px;background:#414858;"></div>
<svg class="a" style="left:587px;top:478px" width="10" height="8"><path d="M0.5 4 Q5 -0.5 9.5 4 Q5 8.5 0.5 4Z" fill="#cfd4dc"/><circle cx="5" cy="4" r="1.6" fill="#3a4050"/></svg>
<div class="a" style="left:601px;top:455px;width:42px;height:56px;background:#2e3440;"></div>
<svg class="a" style="left:602px;top:455px;filter:grayscale(1) contrast(1.4);" width="40" height="54" viewBox="0 0 323 442" preserveAspectRatio="none"><use href="#docimg"/></svg>
<div class="a" style="left:584px;top:569px;width:303px;height:2px;background:#414858;"></div>
<svg class="a" style="left:587px;top:537px" width="10" height="8"><path d="M0.5 4 Q5 -0.5 9.5 4 Q5 8.5 0.5 4Z" fill="#cfd4dc"/><circle cx="5" cy="4" r="1.6" fill="#3a4050"/></svg>
<div class="a" style="left:601px;top:514px;width:42px;height:56px;background:#2e3440;"></div>
<svg class="a" style="left:602px;top:514px;filter:grayscale(1) contrast(1.4);" width="40" height="54" viewBox="0 0 323 442" preserveAspectRatio="none"><use href="#docimg"/></svg>
<div class="a" style="left:584px;top:335px;width:316px;height:13px;background:#3c3c3c;"></div>
<div class="a" style="left:584px;top:335px;width:92px;height:13px;background:#535353;"></div>
<div class="a" style="left:676px;top:335px;width:40px;height:13px;background:#464646;"></div>
<div class="a" style="left:716px;top:335px;width:1px;height:13px;background:#393939;"></div>
<div class="a" style="left:584px;top:569px;width:303px;height:37px;background:#535353;"></div>
<div class="a" style="left:587px;top:592px;width:10px;height:10px;border:1px solid #3e3e3e"></div>
<div class="a" style="left:601px;top:571px;width:42px;height:35px;background:#2e2e2e;"></div>
<div class="a" style="left:602px;top:571px;width:40px;height:35px;background:#ffffff;"></div>
<div class="a" style="left:887px;top:348px;width:13px;height:258px;background:#3a3a3a;"></div>
<div class="a" style="left:888px;top:370px;width:7px;height:204px;background:#8a8a8a;"></div>
<div class="a" style="left:897px;top:335px;width:3px;height:285px;background:#2a2a2a;"></div>
<div class="a" style="left:584px;top:606px;width:316px;height:11px;background:#4b4b4b;"></div>
<div class="a" style="left:584px;top:617px;width:316px;height:3px;background:#2e2e2e;"></div>
<svg class="a" style="left:806px;top:607px" width="80" height="12" fill="none" stroke="#c8c8c8" stroke-width="1"><circle cx="6" cy="6" r="4" stroke-dasharray="1.3 1.3"/><rect x="21" y="2" width="10" height="8"/><circle cx="26" cy="6" r="2.5" fill="#c8c8c8"/><rect x="43" y="3" width="8" height="8" fill="#c8c8c8"/><path d="M45 1 h8 v8"/><path d="M64 3 h8 M65 4 v7 h6 v-7" stroke="#777"/></svg>
<div class="a" style="left:492px;top:177px;width:150px;height:182px;background:#2e2e2e;"></div>
<div class="a" style="left:493px;top:178px;width:148px;height:9px;background:#363636;"></div>
<div class="a" style="left:493px;top:187px;width:148px;height:12px;background:#3e3e3e;"></div>
<div class="a" style="left:493px;top:187px;width:42px;height:12px;background:#535353;"></div>
<div class="a" style="left:493px;top:199px;width:148px;height:23px;background:#535353;"></div>
<div class="a" style="left:493px;top:222px;width:148px;height:1px;background:#404040;"></div>
<div class="a" style="left:493px;top:223px;width:148px;height:131px;background:#535353;"></div>
<div class="a" style="left:501px;top:204px;width:14px;height:13px;background:#2e2e2e;border:1px solid #242424"></div>
<svg class="a" style="left:503px;top:206px" width="10" height="9"><rect x="0" y="0" width="10" height="9" fill="#9a9a9a"/><path d="M1 6 L3 3 L5 5 L7 2 L9 6 V8 H1Z" fill="#e8e8e8"/></svg>
<div class="a" style="left:519px;top:205px;width:12px;height:11px;background:#b0b0b0"></div><div class="a" style="left:522.5px;top:208px;width:5px;height:5px;border-radius:50%;background:#3a3a3a"></div>
<div class="a" style="left:641px;top:199px;width:2px;height:160px;background:#2e2e2e;"></div>
<div class="a" style="left:632px;top:224px;width:9px;height:116px;background:#3a3a3a;"></div>
<div class="a" style="left:634px;top:234px;width:6px;height:56px;background:#8c8c8c;"></div>
<div class="a" style="left:529px;top:229px;width:95px;height:13px;background:linear-gradient(#6c6c6c,#5c5c5c);border:1px solid #3a3a3a;border-radius:2px"></div>
<svg class="a" style="left:501px;top:247px" width="13" height="13" fill="none" stroke="#e0e0e0" stroke-width="1.2"><path d="M3 6 v-4 M5.5 5 v-5 M8 5 v-5 M10.5 6 v-4 M1.5 6 q0.5 6 5 6 q4.5 0 5 -5"/></svg>
<div class="a" style="left:523px;top:247px;width:101px;height:12px;background:linear-gradient(#6c6c6c,#5c5c5c);border:1px solid #3a3a3a;border-radius:2px"></div>
<div class="a" style="left:588px;top:267px;width:37px;height:12px;background:#383838;"></div>
<div class="a" style="left:503px;top:282px;width:119px;height:4px;border-top:1px solid #3a3a3a;background:linear-gradient(90deg,#c85a20,#d8b030 12%,#60c830 24%,#20c040 34%,#30c0a0 44%,#40b8e0 52%,#2060e0 63%,#1818a8 70%,#8028c8 80%,#d030b0 90%,#e84070)"></div>
<svg class="a" style="left:497px;top:285px" width="10" height="7"><path d="M5 0 L9.5 6 L0.5 6Z" fill="#e0e0e0" stroke="#555" stroke-width="0.5"/></svg>
<div class="a" style="left:588px;top:295px;width:37px;height:12px;background:#383838;"></div>
<div class="a" style="left:503px;top:310px;width:119px;height:4px;border-top:1px solid #5a4a50;background:linear-gradient(90deg,#b89a9a,#c85050 55%,#d82a20)"></div>
<div class="a" style="left:503px;top:315px;width:119px;height:1px;background:#7a4a7a;"></div>
<svg class="a" style="left:553px;top:313px" width="10" height="7"><path d="M5 0 L9.5 6 L0.5 6Z" fill="#e0e0e0" stroke="#555" stroke-width="0.5"/></svg>
<div class="a" style="left:588px;top:323px;width:37px;height:12px;background:#383838;"></div>
<div class="a" style="left:503px;top:338px;width:119px;height:2px;background:linear-gradient(90deg,#111,#444 60%,#aaa)"></div>
<div class="a" style="left:493px;top:340px;width:148px;height:1px;background:#3e3e3e;"></div>
<div class="a" style="left:493px;top:341px;width:148px;height:13px;background:#535353;"></div>
<div class="a" style="left:588px;top:341px;width:19px;height:13px;background:#3c3c3c;"></div>
<svg class="a" style="left:528px;top:342px" width="96" height="12" fill="none" stroke="#d8d8d8" stroke-width="1.1"><rect x="5" y="2" width="8" height="8" fill="#c8c8c8"/><path d="M1 9 l3 -3 M1 6 h3 v3"/><path d="M21 6 q5 -5 10 0 q-5 5 -10 0z"/><path d="M31 3 q3 3 0 6"/><path d="M44 3 a4 4 0 1 1 -2 3 M42 2 v3 h3"/><path d="M64 6 q5 -5 10 0 q-5 5 -10 0z" fill="#d8d8d8"/><path d="M86 4 v7 h6 v-7 M85 3 h8 M88 1 h2" /></svg>
<div class="a" style="left:493px;top:354px;width:148px;height:4px;background:#6a6a6a;"></div>
<div class="a" style="left:493px;top:358px;width:148px;height:1px;background:#2e2e2e;"></div>
<svg class="a" style="left:465px;top:220px" width="35" height="72" fill="none" stroke="#780a0e" stroke-width="3.8" stroke-linecap="round"><path d="M17 5 Q19 10 21 14" stroke="#3e1a1c" stroke-width="3"/><path d="M21 14 Q22 44 29.5 67"/><path d="M7.5 49 Q19 59 29.5 67"/></svg>
<div class="a" style="left:898px;top:23px;width:2px;height:597px;background:#303030;"></div>
<div class="t" style="left:4.5px;top:2.92px;font-size:12.5px;line-height:12.5px;color:#c4daf2;font-weight:bold;font-style:normal;transform:scaleX(0.9811);text-shadow:0 0 1px #0c1a30,0 0 1px #0c1a30;">Ps</div>
<div class="t" style="left:32px;top:5.96px;font-size:9.5px;line-height:9.5px;color:#ececec;font-weight:normal;font-style:normal;transform:scaleX(0.8135);">Файл</div>
<div class="t" style="left:62.5px;top:5.96px;font-size:9.5px;line-height:9.5px;color:#ececec;font-weight:normal;font-style:normal;transform:scaleX(0.8706);">Редактирование</div>
<div class="t" style="left:138px;top:5.96px;font-size:9.5px;line-height:9.5px;color:#ececec;font-weight:normal;font-style:normal;transform:scaleX(0.8773);">Изображение</div>
<div class="t" style="left:204px;top:5.96px;font-size:9.5px;line-height:9.5px;color:#ececec;font-weight:normal;font-style:normal;transform:scaleX(0.8225);">Слои</div>
<div class="t" style="left:235px;top:5.96px;font-size:9.5px;line-height:9.5px;color:#ececec;font-weight:normal;font-style:normal;transform:scaleX(0.7999);">Шрифт</div>
<div class="t" style="left:276px;top:5.96px;font-size:9.5px;line-height:9.5px;color:#ececec;font-weight:normal;font-style:normal;transform:scaleX(0.7946);">Выделение</div>
<div class="t" style="left:329px;top:5.96px;font-size:9.5px;line-height:9.5px;color:#ececec;font-weight:normal;font-style:normal;transform:scaleX(0.8460);">Фильтр</div>
<div class="t" style="left:368px;top:5.96px;font-size:9.5px;line-height:9.5px;color:#ececec;font-weight:normal;font-style:normal;transform:scaleX(0.8298);">Просмотр</div>
<div class="t" style="left:420px;top:5.96px;font-size:9.5px;line-height:9.5px;color:#ececec;font-weight:normal;font-style:normal;transform:scaleX(0.9060);">Окно</div>
<div class="t" style="left:450px;top:5.96px;font-size:9.5px;line-height:9.5px;color:#ececec;font-weight:normal;font-style:normal;transform:scaleX(0.9123);">Справка</div>
<div class="t" style="left:875.5px;top:2.88px;font-size:9px;line-height:9px;color:#ffffff;font-weight:bold;font-style:normal;transform:scaleX(1.6172);">×</div>
<div class="t" style="left:32px;top:28.23px;font-size:8px;line-height:8px;color:#e0e0e0;font-weight:normal;font-style:normal;transform:scaleX(0.7578);">▼</div>
<div class="t" style="left:125.5px;top:27.88px;font-size:9px;line-height:9px;color:#f0f0f0;font-weight:bold;font-style:normal;transform:scaleX(0.7133);">Растушевка:</div>
<div class="t" style="left:173.5px;top:27.88px;font-size:9px;line-height:9px;color:#f0f0f0;font-weight:normal;font-style:normal;transform:scaleX(0.8613);">0 пикс.</div>
<div class="t" style="left:226px;top:27.88px;font-size:9px;line-height:9px;color:#7d7d7d;font-weight:normal;font-style:normal;transform:scaleX(0.7647);">Сглаживание</div>
<div class="t" style="left:285px;top:27.88px;font-size:9px;line-height:9px;color:#f0f0f0;font-weight:bold;font-style:normal;transform:scaleX(0.6680);">Стиль:</div>
<div class="t" style="left:317px;top:27.88px;font-size:9px;line-height:9px;color:#f0f0f0;font-weight:bold;font-style:normal;transform:scaleX(0.6799);">Обычный</div>
<div class="t" style="left:384px;top:26.92px;font-size:6px;line-height:6px;color:#e8e8e8;font-weight:normal;font-style:normal;transform:scaleX(0.8420);">▲</div>
<div class="t" style="left:384px;top:32.92px;font-size:6px;line-height:6px;color:#e8e8e8;font-weight:normal;font-style:normal;transform:scaleX(0.8420);">▼</div>
<div class="t" style="left:400px;top:27.88px;font-size:9px;line-height:9px;color:#7d7d7d;font-weight:normal;font-style:normal;transform:scaleX(0.7731);">Шир.:</div>
<div class="t" style="left:479.5px;top:27.88px;font-size:9px;line-height:9px;color:#7d7d7d;font-weight:normal;font-style:normal;transform:scaleX(0.7509);">Выс.:</div>
<div class="t" style="left:547px;top:27.88px;font-size:9px;line-height:9px;color:#b0b0b0;font-weight:normal;font-style:normal;transform:scaleX(0.8081);">Уточн. край...</div>
<div class="t" style="left:794px;top:28.38px;font-size:9px;line-height:9px;color:#f0f0f0;font-weight:bold;font-style:normal;transform:scaleX(0.7187);">Фотография</div>
<div class="t" style="left:887px;top:27.42px;font-size:6px;line-height:6px;color:#e8e8e8;font-weight:normal;font-style:normal;transform:scaleX(0.8420);">▲</div>
<div class="t" style="left:887px;top:33.42px;font-size:6px;line-height:6px;color:#e8e8e8;font-weight:normal;font-style:normal;transform:scaleX(0.8420);">▼</div>
<div class="t" style="left:33.7px;top:46.96px;font-size:9.5px;line-height:9.5px;color:#f0f0f0;font-weight:normal;font-style:normal;transform:scaleX(0.8302);">8цв.psd</div>
<div class="t" style="left:74px;top:46.96px;font-size:9.5px;line-height:9.5px;color:#f0f0f0;font-weight:normal;font-style:normal;transform:scaleX(0.8463);">21.2% (Цветовой тон/Насыщенность 1, RGB/8*) *</div>
<div class="t" style="left:260px;top:46.53px;font-size:10px;line-height:10px;color:#e0e0e0;font-weight:normal;font-style:normal;transform:scaleX(1.1130);">×</div>
<div class="t" style="left:3px;top:44.23px;font-size:8px;line-height:8px;color:#e0e0e0;font-weight:bold;font-style:normal;transform:scaleX(1.3486);">»</div>
<div class="t" style="left:32px;top:607.80px;font-size:8.5px;line-height:8.5px;color:#e8e8e8;font-weight:normal;font-style:normal;transform:scaleX(0.7978);">21.22%</div>
<div class="t" style="left:108px;top:607.80px;font-size:8.5px;line-height:8.5px;color:#e8e8e8;font-weight:normal;font-style:normal;transform:scaleX(0.8014);">Док: 18.9M/92.7M</div>
<div class="t" style="left:197px;top:609.57px;font-size:7px;line-height:7px;color:#e8e8e8;font-weight:normal;font-style:normal;transform:scaleX(0.8660);">►</div>
<div class="t" style="left:888px;top:43.73px;font-size:8px;line-height:8px;color:#d0d0d0;font-weight:bold;font-style:normal;transform:scaleX(1.3486);">»</div>
<div class="t" style="left:589px;top:54.80px;font-size:8.5px;line-height:8.5px;color:#c8c8c8;font-weight:normal;font-style:normal;transform:scaleX(0.8300);">Операции</div>
<div class="t" style="left:633.5px;top:54.80px;font-size:8.5px;line-height:8.5px;color:#c8c8c8;font-weight:normal;font-style:normal;transform:scaleX(0.8495);">Гистограмма</div>
<div class="t" style="left:688px;top:54.80px;font-size:8.5px;line-height:8.5px;color:#f4f4f4;font-weight:bold;font-style:normal;transform:scaleX(0.8065);">Навигатор</div>
<div class="t" style="left:734.5px;top:54.80px;font-size:8.5px;line-height:8.5px;color:#c8c8c8;font-weight:normal;font-style:normal;transform:scaleX(0.8082);">Кисть</div>
<div class="t" style="left:885px;top:55.07px;font-size:7px;line-height:7px;color:#c8c8c8;font-weight:normal;font-style:normal;transform:scaleX(0.9080);">▼≡</div>
<div class="t" style="left:645.8px;top:337.80px;font-size:8.5px;line-height:8.5px;color:#f4f4f4;font-weight:bold;font-style:normal;transform:scaleX(0.8144);">Каналы</div>
<div class="t" style="left:680.5px;top:337.80px;font-size:8.5px;line-height:8.5px;color:#c8c8c8;font-weight:normal;font-style:normal;transform:scaleX(0.9295);">Контуры</div>
<div class="t" style="left:885px;top:338.07px;font-size:7px;line-height:7px;color:#c8c8c8;font-weight:normal;font-style:normal;transform:scaleX(0.9080);">▼≡</div>
<div class="t" style="left:647px;top:359.80px;font-size:8.5px;line-height:8.5px;color:#f0f0f0;font-weight:normal;font-style:normal;transform:scaleX(0.7601);">RGB</div>
<div class="t" style="left:858px;top:359.80px;font-size:8.5px;line-height:8.5px;color:#f0f0f0;font-weight:normal;font-style:normal;transform:scaleX(0.8512);">Ctrl+2</div>
<div class="t" style="left:647px;top:418.80px;font-size:8.5px;line-height:8.5px;color:#f0f0f0;font-weight:normal;font-style:normal;transform:scaleX(0.8332);">Красный</div>
<div class="t" style="left:858px;top:418.80px;font-size:8.5px;line-height:8.5px;color:#f0f0f0;font-weight:normal;font-style:normal;transform:scaleX(0.8512);">Ctrl+3</div>
<div class="t" style="left:647px;top:477.80px;font-size:8.5px;line-height:8.5px;color:#f0f0f0;font-weight:normal;font-style:normal;transform:scaleX(0.7956);">Зеленый</div>
<div class="t" style="left:858px;top:477.80px;font-size:8.5px;line-height:8.5px;color:#f0f0f0;font-weight:normal;font-style:normal;transform:scaleX(0.8512);">Ctrl+4</div>
<div class="t" style="left:647px;top:536.80px;font-size:8.5px;line-height:8.5px;color:#f0f0f0;font-weight:normal;font-style:normal;transform:scaleX(0.8175);">Синий</div>
<div class="t" style="left:858px;top:536.80px;font-size:8.5px;line-height:8.5px;color:#f0f0f0;font-weight:normal;font-style:normal;transform:scaleX(0.8512);">Ctrl+5</div>
<div class="t" style="left:647px;top:592.80px;font-size:8.5px;line-height:8.5px;color:#f0f0f0;font-weight:normal;font-style:italic;transform:scaleX(0.7603);">Маска Цветовой тон/Насыщенность 1</div>
<div class="t" style="left:858px;top:592.80px;font-size:8.5px;line-height:8.5px;color:#f0f0f0;font-weight:normal;font-style:normal;transform:scaleX(0.9492);">Ctrl+\</div>
<div class="t" style="left:889px;top:352.07px;font-size:7px;line-height:7px;color:#e0e0e0;font-weight:normal;font-style:normal;transform:scaleX(0.7217);">▲</div>
<div class="t" style="left:889px;top:597.07px;font-size:7px;line-height:7px;color:#e0e0e0;font-weight:normal;font-style:normal;transform:scaleX(0.7217);">▼</div>
<div class="t" style="left:620px;top:178.73px;font-size:8px;line-height:8px;color:#d0d0d0;font-weight:bold;font-style:normal;transform:scaleX(1.3486);">«</div>
<div class="t" style="left:632px;top:179.23px;font-size:8px;line-height:8px;color:#e0e0e0;font-weight:bold;font-style:normal;transform:scaleX(1.4983);">×</div>
<div class="t" style="left:498px;top:189.68px;font-size:9px;line-height:9px;color:#eeeeee;font-weight:bold;font-style:normal;transform:scaleX(0.7364);">Свойства</div>
<div class="t" style="left:631px;top:190.07px;font-size:7px;line-height:7px;color:#c8c8c8;font-weight:normal;font-style:normal;transform:scaleX(0.8172);">▼≡</div>
<div class="t" style="left:537px;top:206.46px;font-size:9.5px;line-height:9.5px;color:#f4f4f4;font-weight:bold;font-style:normal;transform:scaleX(0.7863);width:133px;overflow:hidden;">Цветовой тон/Насыщенность</div>
<div class="t" style="left:633.5px;top:225.07px;font-size:7px;line-height:7px;color:#e0e0e0;font-weight:normal;font-style:normal;transform:scaleX(0.8660);">▲</div>
<div class="t" style="left:633.5px;top:333.07px;font-size:7px;line-height:7px;color:#e0e0e0;font-weight:normal;font-style:normal;transform:scaleX(0.8660);">▼</div>
<div class="t" style="left:505px;top:230.88px;font-size:9px;line-height:9px;color:#eeeeee;font-weight:normal;font-style:normal;transform:scaleX(0.7370);">Набор:</div>
<div class="t" style="left:534.5px;top:230.88px;font-size:9px;line-height:9px;color:#eeeeee;font-weight:normal;font-style:normal;transform:scaleX(0.7411);">Заказная</div>
<div class="t" style="left:618.5px;top:229.92px;font-size:6px;line-height:6px;color:#e8e8e8;font-weight:normal;font-style:normal;transform:scaleX(0.8420);">▲</div>
<div class="t" style="left:618.5px;top:235.92px;font-size:6px;line-height:6px;color:#e8e8e8;font-weight:normal;font-style:normal;transform:scaleX(0.8420);">▼</div>
<div class="t" style="left:528.5px;top:248.88px;font-size:9px;line-height:9px;color:#eeeeee;font-weight:normal;font-style:normal;transform:scaleX(0.6771);">Все</div>
<div class="t" style="left:618.5px;top:247.42px;font-size:6px;line-height:6px;color:#e8e8e8;font-weight:normal;font-style:normal;transform:scaleX(0.8420);">▲</div>
<div class="t" style="left:618.5px;top:253.42px;font-size:6px;line-height:6px;color:#e8e8e8;font-weight:normal;font-style:normal;transform:scaleX(0.8420);">▼</div>
<div class="t" style="left:499px;top:269.38px;font-size:9px;line-height:9px;color:#f2f2f2;font-weight:bold;font-style:normal;transform:scaleX(0.6894);">Цветовой тон:</div>
<div class="t" style="left:592px;top:268.38px;font-size:9px;line-height:9px;color:#eeeeee;font-weight:normal;font-style:normal;transform:scaleX(0.7772);">-180</div>
<div class="t" style="left:499px;top:297.38px;font-size:9px;line-height:9px;color:#f2f2f2;font-weight:bold;font-style:normal;transform:scaleX(0.6762);">Насыщенность:</div>
<div class="t" style="left:592px;top:296.38px;font-size:9px;line-height:9px;color:#eeeeee;font-weight:normal;font-style:normal;transform:scaleX(0.8747);">-6</div>
<div class="t" style="left:499px;top:325.38px;font-size:9px;line-height:9px;color:#f2f2f2;font-weight:bold;font-style:normal;transform:scaleX(0.7184);">Яркость:</div>
<div class="t" style="left:592px;top:324.38px;font-size:9px;line-height:9px;color:#eeeeee;font-weight:normal;font-style:normal;transform:scaleX(0.7533);">+19</div>
</body></html>
